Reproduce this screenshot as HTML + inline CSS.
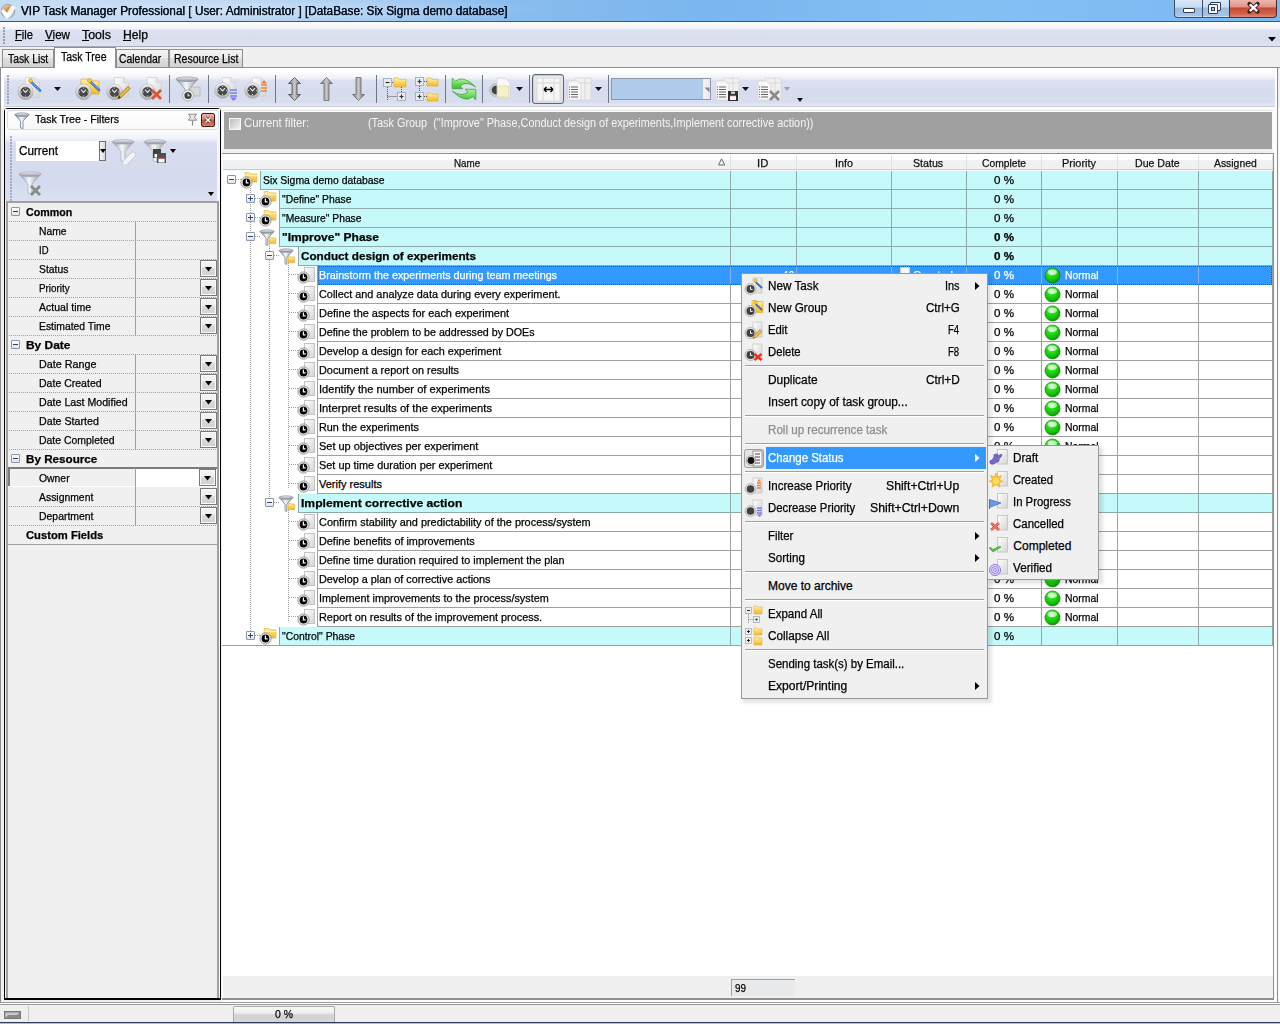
<!DOCTYPE html><html><head><meta charset="utf-8"><style>
*{box-sizing:border-box;margin:0;padding:0}
body{width:1280px;height:1024px;overflow:hidden;position:relative;background:#f0f0f0;font-family:"Liberation Sans",sans-serif;font-size:12px;color:#000}
.a{position:absolute}
.t{position:absolute;white-space:pre;-webkit-text-stroke:0.25px currentColor}
svg.a{overflow:visible}
</style></head><body>
<svg width="0" height="0" style="position:absolute">
<defs>
<radialGradient id="gball" cx="0.42" cy="0.3" r="0.75">
 <stop offset="0" stop-color="#e0ffe0"/><stop offset="0.3" stop-color="#2ee01e"/><stop offset="0.75" stop-color="#0cbc00"/><stop offset="1" stop-color="#067a00"/>
</radialGradient>
<linearGradient id="gfold" x1="0" y1="0" x2="0" y2="1"><stop offset="0" stop-color="#fff2b0"/><stop offset="0.5" stop-color="#fbd560"/><stop offset="1" stop-color="#f0b828"/></linearGradient>
<linearGradient id="gfun" x1="0" y1="0" x2="1" y2="0"><stop offset="0" stop-color="#8a9098"/><stop offset="0.45" stop-color="#f6f8fa"/><stop offset="1" stop-color="#8e949c"/></linearGradient>
<linearGradient id="grim" x1="0" y1="0" x2="0" y2="1"><stop offset="0" stop-color="#f2f4f6"/><stop offset="1" stop-color="#8890a0"/></linearGradient>
<linearGradient id="gpap" x1="0" y1="0" x2="1" y2="1"><stop offset="0" stop-color="#ffffff"/><stop offset="1" stop-color="#d4d4d4"/></linearGradient>
<linearGradient id="gring" x1="0" y1="0" x2="0" y2="1"><stop offset="0" stop-color="#f4f4f4"/><stop offset="1" stop-color="#a8a8a8"/></linearGradient>
<linearGradient id="garr" x1="0" y1="0" x2="1" y2="0"><stop offset="0" stop-color="#7a7a7a"/><stop offset="0.5" stop-color="#c8c8c8"/><stop offset="1" stop-color="#6a6a6a"/></linearGradient>
<linearGradient id="ggreen" x1="0" y1="0" x2="0" y2="1"><stop offset="0" stop-color="#a6f08a"/><stop offset="1" stop-color="#1fa81a"/></linearGradient>

<symbol id="ball" viewBox="0 0 17 17"><circle cx="8.5" cy="8.5" r="7.6" fill="url(#gball)" stroke="#0a6000" stroke-width="0.5"/><ellipse cx="8.3" cy="5.2" rx="4.6" ry="2.8" fill="#eaffea" opacity="0.7"/></symbol>
<symbol id="smclk" viewBox="0 0 13 13"><circle cx="6.5" cy="6.5" r="5.6" fill="#f4f4f6" stroke="#8a8a90" stroke-width="0.9"/><circle cx="6.5" cy="6.5" r="3.9" fill="#050505"/><path d="M6.4 3.6V6.9H8.6" stroke="#fff" stroke-width="1.2" fill="none"/></symbol>
<symbol id="folder" viewBox="0 0 14 12"><path d="M1.2 1.5h4.2l1.2 1.4h6.2v8.2H1.2z" fill="url(#gfold)" stroke="#e0b040" stroke-width="0.7"/><path d="M1.2 4.5h11.8" stroke="#fff4c0" stroke-width="0.8"/></symbol>
<symbol id="paper" viewBox="0 0 12 15"><rect x="1.5" y="0.5" width="10" height="14" fill="url(#gpap)" stroke="#c4c4c4" stroke-width="1"/></symbol>
<symbol id="paper_st" viewBox="0 0 12 16"><rect x="1.5" y="0.5" width="10" height="14.5" fill="url(#gpap)" stroke="#c8c8c8" stroke-width="1"/></symbol>
<symbol id="funnel_tree" viewBox="0 0 18 17"><path d="M1 2.2 L9 10 V16.2 L7.2 14.8 V10 Z" fill="none"/><path d="M1.2 2.4 L7 9.2 V15.8 L8.8 16.4 V9.2 L15 2.4Z" fill="url(#gfun)" stroke="#7a8088" stroke-width="0.8"/><ellipse cx="8.1" cy="2.5" rx="7" ry="1.7" fill="url(#grim)" stroke="#7a8090" stroke-width="0.6"/><path d="M10 8.2h2.2l0.7 0.8h3.8v5.6H10z" fill="url(#gfold)" stroke="#d8a838" stroke-width="0.6"/></symbol>
<symbol id="funnel_sm" viewBox="0 0 16 17"><path d="M1 2.6 L6.5 9.2 V15.8 L9 16.6 V9.2 L15 2.6Z" fill="url(#gfun)" stroke="#70808e" stroke-width="0.8"/><ellipse cx="8" cy="2.6" rx="7" ry="1.8" fill="url(#grim)" stroke="#6e7e90" stroke-width="0.6"/></symbol>

<symbol id="bigclk" viewBox="0 0 18 18"><circle cx="9" cy="9" r="8.3" fill="url(#gring)" stroke="#b0b0b0" stroke-width="0.6"/><circle cx="9" cy="9" r="5.8" fill="#484848" stroke="#d8d8d8" stroke-width="0.8"/><path d="M6.3 6.4 L9 9.4 L11.7 6.4" stroke="#f0f0f0" stroke-width="1.1" fill="none"/><circle cx="9" cy="4.8" r="0.6" fill="#eee"/><circle cx="9" cy="13.2" r="0.6" fill="#eee"/><circle cx="4.8" cy="9" r="0.6" fill="#eee"/><circle cx="13.2" cy="9" r="0.6" fill="#eee"/></symbol>
<symbol id="docfold" viewBox="0 0 15 21"><path d="M0.5 0.5H9.5L14.5 5.5V20.5H0.5Z" fill="url(#gpap)" stroke="#d0d0d0" stroke-width="0.8"/><path d="M9.5 0.5V5.5H14.5" fill="#e4e4e4" stroke="#c8c8c8" stroke-width="0.6"/></symbol>

<symbol id="tb_newtask" viewBox="0 0 28 26"><use href="#docfold" x="10" y="1" width="15" height="21"/><path d="M16 6 L25 14.5" stroke="#3a70c0" stroke-width="2.6" stroke-linecap="round"/><path d="M16 6 L25 14.5" stroke="#9cc0f0" stroke-width="1.2" stroke-dasharray="1 1"/><circle cx="15.5" cy="4.5" r="2" fill="#f6d030" stroke="#c09010" stroke-width="0.6"/><use href="#bigclk" x="2" y="7.5" width="17" height="17"/></symbol>
<symbol id="tb_newgroup" viewBox="0 0 28 26"><path d="M8 3h7l2 2h9v13H8z" fill="url(#gfold)" stroke="#e0b040" stroke-width="0.8"/><path d="M17.5 6 L26 14" stroke="#3a70c0" stroke-width="2.6" stroke-linecap="round"/><path d="M17.5 6 L26 14" stroke="#9cc0f0" stroke-width="1.2" stroke-dasharray="1 1"/><circle cx="16.5" cy="4.5" r="2" fill="#f6d030" stroke="#c09010" stroke-width="0.6"/><use href="#bigclk" x="2" y="7.5" width="17" height="17"/></symbol>
<symbol id="tb_edit" viewBox="0 0 28 26"><use href="#docfold" x="10" y="1" width="15" height="21"/><use href="#bigclk" x="2" y="7.5" width="17" height="17"/><path d="M14 23 L15 19.5 L24 10.5 L26 12.5 L17 21.5Z" fill="#f0c040" stroke="#8a6010" stroke-width="0.8"/><path d="M14 23 L15 19.5 L17 21.5Z" fill="#333"/></symbol>
<symbol id="tb_delete" viewBox="0 0 28 26"><use href="#docfold" x="10" y="1" width="15" height="21"/><use href="#bigclk" x="2" y="7.5" width="17" height="17"/><path d="M15 14 L24 23 M24 14 L15 23" stroke="#e8502a" stroke-width="2.6"/></symbol>
<symbol id="tb_funclock" viewBox="0 0 26 26"><path d="M1 3 L10 13 V21 L14 22 V13 L23 3Z" fill="url(#gfun)" stroke="#888" stroke-width="0.7"/><ellipse cx="12" cy="3.2" rx="11" ry="2.3" fill="url(#grim)" stroke="#8a8a8a" stroke-width="0.6"/><rect x="16" y="11" width="9" height="9" fill="#d8d8d8" stroke="#aaa" stroke-width="0.6"/><circle cx="13" cy="19.5" r="5.5" fill="#f0f0f0" stroke="#999" stroke-width="0.7"/><circle cx="13" cy="19.5" r="3.6" fill="#404040"/><path d="M13 17.3V19.8H15" stroke="#fff" stroke-width="0.9" fill="none"/></symbol>
<symbol id="tb_dec" viewBox="0 0 26 26"><use href="#docfold" x="9" y="1" width="14" height="20"/><use href="#bigclk" x="1" y="6" width="17" height="17"/><path d="M17 14h7M17 17h7M17 20h7" stroke="#7a80e8" stroke-width="1.6"/><path d="M17 21.5h7L20.5 25Z" fill="#7a80e8"/></symbol>
<symbol id="tb_inc" viewBox="0 0 26 26"><use href="#docfold" x="9" y="1" width="14" height="20"/><use href="#bigclk" x="1" y="6" width="17" height="17"/><path d="M18 9h6M18 12h6M18 15h6" stroke="#f08040" stroke-width="1.6"/><path d="M18 7.5h6L21 4Z" fill="#f08040"/></symbol>
<symbol id="arr_both" viewBox="0 0 13 24"><path d="M6.5 0.5L12.5 6.5H9V17.5H12.5L6.5 23.5L0.5 17.5H4V6.5H0.5Z" fill="url(#garr)" stroke="#4a4a4a" stroke-width="0.8"/></symbol>
<symbol id="arr_up" viewBox="0 0 13 24"><path d="M6.5 0.5L12.5 6.5H9V23.5H4V6.5H0.5Z" fill="url(#garr)" stroke="#6a6a6a" stroke-width="0.8"/></symbol>
<symbol id="arr_down" viewBox="0 0 13 24"><path d="M4 0.5H9V17.5H12.5L6.5 23.5L0.5 17.5H4Z" fill="url(#garr)" stroke="#6a6a6a" stroke-width="0.8"/></symbol>
<symbol id="tb_expand" viewBox="0 0 26 24"><rect x="1.5" y="1.5" width="8" height="8" fill="#e8ecf2" stroke="#9aa6b4" stroke-width="0.8"/><path d="M3.5 5.5h4" stroke="#333" stroke-width="1.2"/><path d="M12 1h4l1 1.3h7V10H12z" fill="url(#gfold)" stroke="#e0b040" stroke-width="0.7"/><rect x="15.5" y="15.5" width="8" height="8" fill="#e8ecf2" stroke="#9aa6b4" stroke-width="0.8"/><path d="M17.5 19.5h4M19.5 17.5v4" stroke="#333" stroke-width="1.2"/><path d="M5.5 10V23M5.5 19.5H15M19.5 10V15M10 5.5H12" stroke="#333" stroke-width="0.8" stroke-dasharray="1 1"/></symbol>
<symbol id="tb_collapse" viewBox="0 0 26 26"><rect x="1.5" y="1.5" width="8" height="8" fill="#e8ecf2" stroke="#9aa6b4" stroke-width="0.8"/><path d="M3.5 5.5h4M5.5 3.5v4" stroke="#333" stroke-width="1.2"/><path d="M13 2h4l1 1.3h6V10H13z" fill="url(#gfold)" stroke="#e0b040" stroke-width="0.7"/><rect x="1.5" y="16.5" width="8" height="8" fill="#e8ecf2" stroke="#9aa6b4" stroke-width="0.8"/><path d="M3.5 20.5h4M5.5 18.5v4" stroke="#333" stroke-width="1.2"/><path d="M13 17h4l1 1.3h6V25H13z" fill="url(#gfold)" stroke="#e0b040" stroke-width="0.7"/><path d="M5.5 10V16M10 5.5H13M10 20.5H13" stroke="#333" stroke-width="0.8" stroke-dasharray="1 1"/></symbol>
<symbol id="tb_refresh" viewBox="0 0 30 28"><path d="M3.2 3 L6.3 6.2 Q14 -0.5 26.6 11.8 Q17 5.5 11 11 L13.7 13.7 L3.2 13.7 Z" fill="url(#ggreen2)" stroke="#3c9a34" stroke-width="0.7" stroke-linejoin="round"/><path d="M26.8 25 L23.7 21.8 Q16 28.5 3.4 16.2 Q13 22.5 19 17 L16.3 14.3 L26.8 14.3 Z" fill="url(#ggreen3)" stroke="#3c9a34" stroke-width="0.7" stroke-linejoin="round"/></symbol>
<linearGradient id="ggreen2" x1="0" y1="0" x2="0" y2="1"><stop offset="0" stop-color="#c8f8b8"/><stop offset="0.6" stop-color="#58d848"/><stop offset="1" stop-color="#3cc030"/></linearGradient>
<linearGradient id="ggreen3" x1="0" y1="0" x2="0" y2="1"><stop offset="0" stop-color="#a8f098"/><stop offset="0.5" stop-color="#78e068"/><stop offset="1" stop-color="#40c434"/></linearGradient>
<symbol id="tb_clockpaper" viewBox="0 0 26 24"><circle cx="8" cy="13" r="6.5" fill="#c8c8c8" stroke="#aaa" stroke-width="0.6"/><circle cx="8" cy="13" r="4.3" fill="#404040"/><path d="M9 1h8l5 5v15H9z" fill="#f8f8f8" stroke="#d0d0d0" stroke-width="0.8"/><rect x="9.5" y="9" width="11" height="11" fill="#f6f0c8" stroke="#d8d0a0" stroke-width="0.6"/></symbol>
<symbol id="tb_table" viewBox="0 0 25 25"><rect x="1" y="1" width="23" height="23" fill="#f6f6f6" stroke="#d8d8d8" stroke-width="0.8"/><path d="M7 1V24M18 1V24M1 6H24" stroke="#d0d0d0" stroke-width="0.8"/><path d="M8 12.5H17M8 12.5L10.5 10M8 12.5L10.5 15M17 12.5L14.5 10M17 12.5L14.5 15" stroke="#000" stroke-width="1.4"/></symbol>
<symbol id="tb_report" viewBox="0 0 25 24"><rect x="8" y="1" width="16" height="22" fill="#f0f0f0" stroke="#d8d8d8" stroke-width="0.8"/><path d="M18 1V23M8 6H24" stroke="#d4d4d4" stroke-width="0.8"/><path d="M1 4H10L14 8V23H1Z" fill="#f8f8f8" stroke="#d4d4d4" stroke-width="0.8"/><path d="M4 10h7M4 12.5h7M4 15h7M4 17.5h7M4 20h7" stroke="#555" stroke-width="0.9"/><path d="M2 10h1M2 12.5h1M2 15h1M2 17.5h1M2 20h1" stroke="#555" stroke-width="0.9"/></symbol>
<symbol id="tb_save" viewBox="0 0 25 24"><use href="#tb_report" x="0" y="0" width="25" height="24"/><path d="M13 14h10v10H13z" fill="#303030"/><rect x="15" y="19" width="6" height="4" fill="#fff"/><rect x="15" y="18" width="6" height="1.2" fill="#e03030"/><rect x="16" y="14.5" width="4" height="2.5" fill="#c8c8c8"/></symbol>
<symbol id="tb_delrep" viewBox="0 0 25 24"><use href="#tb_report" x="0" y="0" width="25" height="24"/><path d="M13 14 L22 23 M22 14 L13 23" stroke="#8a8a8a" stroke-width="2.6"/></symbol>

<symbol id="pn_funerase" viewBox="0 0 25 25"><path d="M1 2.5 L10 12.5 V22 L14 23 V12.5 L23 2.5Z" fill="url(#gfun)" stroke="#9aa0a8" stroke-width="0.6"/><ellipse cx="12" cy="2.8" rx="11" ry="2.2" fill="url(#grim)" stroke="#9aa0a8" stroke-width="0.6"/><path d="M12 22 L20 14 A2.5 2.5 0 0 1 24 17.5 L16 25.5 A2.5 2.5 0 0 1 12 22Z" fill="#f4f4f4" stroke="#b8b8b8" stroke-width="0.7"/></symbol>
<symbol id="pn_funsave" viewBox="0 0 25 25"><path d="M1 2.5 L10 12.5 V22 L14 23 V12.5 L23 2.5Z" fill="url(#gfun)" stroke="#9aa0a8" stroke-width="0.6"/><ellipse cx="12" cy="2.8" rx="11" ry="2.2" fill="url(#grim)" stroke="#9aa0a8" stroke-width="0.6"/><path d="M10 10h8v9h-8z" fill="#404040"/><rect x="11.5" y="15" width="5" height="3.5" fill="#fff"/><path d="M14 14h9v10h-9z" fill="#505050"/><rect x="15.5" y="19.5" width="6" height="4" fill="#fff"/><rect x="15.5" y="18.6" width="6" height="1" fill="#e03030"/></symbol>
<symbol id="pn_funclear" viewBox="0 0 26 26"><path d="M1 3 L10 13 V22 L14 23 V13 L23 3Z" fill="url(#gfun)" stroke="#9aa0a8" stroke-width="0.6"/><ellipse cx="12" cy="3.2" rx="11" ry="2.3" fill="url(#grim)" stroke="#9aa0a8" stroke-width="0.6"/><path d="M13 15 L22 24 M22 15 L13 24" stroke="#8a8a8a" stroke-width="2.8"/></symbol>

<symbol id="mi_newtask" viewBox="0 0 20 19"><rect x="9" y="1" width="9" height="15" fill="url(#gpap)" stroke="#c8c8c8" stroke-width="0.8"/><path d="M12 5.5L17.5 10.5" stroke="#3a70c0" stroke-width="2" stroke-linecap="round"/><circle cx="11.5" cy="3.5" r="1.8" fill="#f6d030" stroke="#c09010" stroke-width="0.5"/><circle cx="6.5" cy="12" r="5.6" fill="#e0e0e0" stroke="#999" stroke-width="0.6"/><circle cx="6.5" cy="12" r="4" fill="#404040"/><path d="M6.5 9.6V12.4H8.6" stroke="#fff" stroke-width="1" fill="none"/></symbol>
<symbol id="mi_newgroup" viewBox="0 0 20 19"><path d="M8 1.5h4l1 1h6v11H8z" fill="url(#gfold)" stroke="#e0b040" stroke-width="0.7"/><path d="M12 5.5L17.5 10.5" stroke="#3a70c0" stroke-width="2" stroke-linecap="round"/><circle cx="11.5" cy="3.5" r="1.8" fill="#f6d030" stroke="#c09010" stroke-width="0.5"/><circle cx="6.5" cy="12" r="5.6" fill="#e0e0e0" stroke="#999" stroke-width="0.6"/><circle cx="6.5" cy="12" r="4" fill="#404040"/><path d="M6.5 9.6V12.4H8.6" stroke="#fff" stroke-width="1" fill="none"/></symbol>
<symbol id="mi_edit" viewBox="0 0 20 19"><rect x="9" y="1" width="9" height="15" fill="url(#gpap)" stroke="#c8c8c8" stroke-width="0.8"/><circle cx="6.5" cy="12" r="5.6" fill="#e0e0e0" stroke="#999" stroke-width="0.6"/><circle cx="6.5" cy="12" r="4" fill="#404040"/><path d="M6.5 9.6V12.4H8.6" stroke="#fff" stroke-width="1" fill="none"/><path d="M9 17.5L10 14.5L16 8.5L18 10.5L12 16.5Z" fill="#f0c040" stroke="#8a6010" stroke-width="0.6"/></symbol>
<symbol id="mi_delete" viewBox="0 0 20 19"><rect x="9" y="1" width="9" height="15" fill="url(#gpap)" stroke="#c8c8c8" stroke-width="0.8"/><circle cx="6.5" cy="12" r="5.6" fill="#e0e0e0" stroke="#999" stroke-width="0.6"/><circle cx="6.5" cy="12" r="4" fill="#404040"/><path d="M6.5 9.6V12.4H8.6" stroke="#fff" stroke-width="1" fill="none"/><path d="M10.5 11L17.5 17M17.5 11L10.5 17" stroke="#e83020" stroke-width="2.4"/></symbol>
<symbol id="mi_status" viewBox="0 0 20 19"><rect x="0.5" y="0.5" width="19" height="18" rx="2" fill="#e4e4e4" stroke="#8a8a8a" stroke-width="0.8"/><rect x="9" y="2" width="9" height="15" fill="#f8f8f8" stroke="#707070" stroke-width="0.7"/><path d="M11 5h5M11 8h5M11 11h5M11 14h5" stroke="#333" stroke-width="0.9"/><circle cx="7" cy="11.5" r="4.8" fill="#d8d8d8" stroke="#888" stroke-width="0.6"/><circle cx="7" cy="11.5" r="3.4" fill="#111"/></symbol>
<symbol id="mi_inc" viewBox="0 0 20 19"><rect x="9" y="1" width="9" height="15" fill="url(#gpap)" stroke="#c8c8c8" stroke-width="0.8"/><path d="M13 6h4M13 8.5h4M13 11h4" stroke="#f08040" stroke-width="1.3"/><path d="M13 4.5h4L15 2Z" fill="#f08040"/><circle cx="6.5" cy="12" r="5.4" fill="#e0e0e0" stroke="#999" stroke-width="0.6"/><circle cx="6.5" cy="12" r="3.8" fill="#404040"/></symbol>
<symbol id="mi_dec" viewBox="0 0 20 19"><rect x="9" y="1" width="9" height="15" fill="url(#gpap)" stroke="#c8c8c8" stroke-width="0.8"/><path d="M13 9h5M13 11.5h5M13 14h5" stroke="#7a80e8" stroke-width="1.3"/><path d="M13 15.5h5L15.5 18Z" fill="#7a80e8"/><circle cx="6.5" cy="12" r="5.4" fill="#e0e0e0" stroke="#999" stroke-width="0.6"/><circle cx="6.5" cy="12" r="3.8" fill="#404040"/></symbol>
<symbol id="mi_expand" viewBox="0 0 20 19"><rect x="1.5" y="2.5" width="6" height="6" fill="#eef0f4" stroke="#9aa6b4" stroke-width="0.7"/><path d="M3 5.5h3" stroke="#222" stroke-width="1"/><path d="M10 1h3l1 1h4v7h-8z" fill="url(#gfold)" stroke="#e0b040" stroke-width="0.6"/><rect x="9.5" y="11.5" width="6" height="6" fill="#eef0f4" stroke="#9aa6b4" stroke-width="0.7"/><circle cx="12.5" cy="14.5" r="1.1" fill="#222"/><path d="M4.5 9V18M4.5 14.5H9.5" stroke="#555" stroke-width="0.7" stroke-dasharray="0.8 0.8"/></symbol>
<symbol id="mi_collapse" viewBox="0 0 20 19"><rect x="1.5" y="1.5" width="6" height="6" fill="#eef0f4" stroke="#9aa6b4" stroke-width="0.7"/><path d="M3 4.5h3M4.5 3v3" stroke="#222" stroke-width="1"/><path d="M10 1h3l1 1h4v6h-8z" fill="url(#gfold)" stroke="#e0b040" stroke-width="0.6"/><rect x="1.5" y="10.5" width="6" height="6" fill="#eef0f4" stroke="#9aa6b4" stroke-width="0.7"/><path d="M3 13.5h3M4.5 12v3" stroke="#222" stroke-width="1"/><path d="M10 10h3l1 1h4v7h-8z" fill="url(#gfold)" stroke="#e0b040" stroke-width="0.6"/></symbol>

<symbol id="st_draft" viewBox="0 0 16 16"><path d="M2 13 Q1 10 4 10 L6 7 Q5 4 8 4 Q10 3 10 6 L13 4 Q15 5 13 7 L11 9 Q12 12 9 12 L6 14 Q3 15 2 13Z" fill="#7a68c8" stroke="#5a4aa8" stroke-width="0.6"/></symbol>
<symbol id="st_created" viewBox="0 0 16 16"><path d="M8 1L9.5 5L13.5 3.5L11.5 7.5L15 9.5L11 10.5L12 15L8 12.5L4 15L5 10.5L1 9.5L4.5 7.5L2.5 3.5L6.5 5Z" fill="#ffc830" stroke="#f0a020" stroke-width="0.6"/><circle cx="8" cy="9" r="3" fill="#ffe060"/></symbol>
<symbol id="st_prog" viewBox="0 0 16 16"><path d="M1.5 5.5 L13 9 L1.5 13.5Z" fill="#6a9ae8" stroke="#3a6ac0" stroke-width="0.7"/><path d="M1.5 5.5V15" stroke="#3a6ac0" stroke-width="1"/></symbol>
<symbol id="st_cancel" viewBox="0 0 16 16"><path d="M3 7 L11 14 M11 7 L3 14" stroke="#e84a3a" stroke-width="2.6"/><path d="M3 7 L11 14 M11 7 L3 14" stroke="#ff9a8a" stroke-width="0.8"/></symbol>
<symbol id="st_done" viewBox="0 0 16 16"><path d="M1 10 L5 14 L13 9 L11 8.5 L5 11.5 L3 9.5Z" fill="#60b848" stroke="#3a9a2a" stroke-width="0.6"/></symbol>
<symbol id="st_verif" viewBox="0 0 16 16"><circle cx="7" cy="10" r="5.5" fill="#e8e0ff" stroke="#8a70e0" stroke-width="1"/><circle cx="7" cy="10" r="3.5" fill="none" stroke="#8a70e0" stroke-width="0.9"/><circle cx="7" cy="10" r="1.5" fill="none" stroke="#8a70e0" stroke-width="0.8"/></symbol>
</defs></svg>
<div class="a" style="left:0px;top:0px;width:1280px;height:21px;background:linear-gradient(90deg,#c6dcf2 0%,#b8d4f1 18%,#a0c8f0 30%,#88bcef 40%,#7ab6ee 55%,#84bff4 75%,#7cb9f1 100%)"></div>
<div class="a" style="left:0px;top:0px;width:560px;height:21px;background:radial-gradient(ellipse 300px 14px at 250px 10px,rgba(255,255,255,0.35),rgba(255,255,255,0))"></div>
<div class="a" style="left:0px;top:21px;width:1280px;height:1px;background:#44566c"></div>
<svg class="a" style="left:0px;top:1px" width="18" height="18" viewBox="0 0 18 18"><defs><linearGradient id="gapp" x1="0" y1="0" x2="1" y2="1"><stop offset="0" stop-color="#ffd8a8"/><stop offset="0.6" stop-color="#ec8a1e"/><stop offset="1" stop-color="#c06010"/></linearGradient></defs><circle cx="8" cy="10.2" r="6.8" fill="#c8ccd4" stroke="#8a909a" stroke-width="0.8"/><path d="M2.6 8.6 L7.2 15.6 L13.8 5.4" stroke="#ffffff" stroke-width="4.2" fill="none" stroke-linejoin="round"/><path d="M2.2 7.2 L11.2 4.2 L7 11.6Z" fill="url(#gapp)"/></svg>
<div class="t" style="left:21.00px;top:4.84px;font-size:12px;line-height:12px;font-weight:400;color:#0a1424;transform:scaleX(0.9826);transform-origin:0 0;text-shadow:0 0 0.3px #0a1424;">VIP Task Manager Professional [ User: Administrator ] [DataBase: Six Sigma demo database]</div>
<div class="a" style="left:1174px;top:0;width:29px;height:18px;border:1px solid #3e4e66;border-top:none;border-radius:0 0 0 4px;background:linear-gradient(#d9e8f7 0%,#c6dbf1 42%,#9bbde3 47%,#a6c6ea 100%);box-shadow:inset 0 -1px 0 #c8dcf2"></div>
<div class="a" style="left:1202px;top:0;width:28px;height:18px;border:1px solid #3e4e66;border-top:none;background:linear-gradient(#d9e8f7 0%,#c6dbf1 42%,#9bbde3 47%,#a6c6ea 100%);box-shadow:inset 0 -1px 0 #c8dcf2"></div>
<div class="a" style="left:1229px;top:0;width:48px;height:18px;border:1px solid #4a2a2a;border-top:none;border-radius:0 0 4px 0;background:linear-gradient(#ecb8ae 0%,#e0948a 40%,#c84a34 47%,#d06048 80%,#e08a78 100%)"></div>
<div class="a" style="left:1183px;top:8px;width:12px;height:5px;background:#fff;border:1px solid #2e3c52;border-radius:1px"></div>
<div class="a" style="left:1210px;top:2px;width:11px;height:9px;border:1px solid #2e3c52;border-radius:1px;background:#f4f8fc"></div>
<div class="a" style="left:1208px;top:4px;width:10px;height:10px;border:1px solid #2e3c52;border-radius:1px;background:#f8fbff"></div>
<div class="a" style="left:1211px;top:7px;width:4px;height:4px;border:1px solid #2e3c52;background:#a8c4e4"></div>
<svg class="a" style="left:1247px;top:2px" width="13" height="11" viewBox="0 0 13 11"><path d="M2.5 2L10.5 9.5M10.5 2L2.5 9.5" stroke="#3a1a14" stroke-width="4.2" stroke-linecap="round"/><path d="M2.8 2.3L10.2 9.2M10.2 2.3L2.8 9.2" stroke="#fff" stroke-width="2.4"/></svg>
<div class="a" style="left:0px;top:22px;width:1280px;height:24px;background:linear-gradient(#fdfdfe 0%,#f3f5fa 26%,#dce2f1 34%,#d7deef 75%,#dfe4f2 100%)"></div>
<div class="a" style="left:0px;top:46px;width:1280px;height:1px;background:#a4a9b4"></div>
<div class="a" style="left:3px;top:27px;width:2px;height:2px;background:#98a0b0"></div>
<div class="a" style="left:3px;top:30px;width:2px;height:2px;background:#98a0b0"></div>
<div class="a" style="left:3px;top:33px;width:2px;height:2px;background:#98a0b0"></div>
<div class="a" style="left:3px;top:36px;width:2px;height:2px;background:#98a0b0"></div>
<div class="a" style="left:3px;top:39px;width:2px;height:2px;background:#98a0b0"></div>
<div class="a" style="left:3px;top:42px;width:2px;height:2px;background:#98a0b0"></div>
<div class="t" style="left:15.00px;top:28.84px;font-size:12px;line-height:12px;font-weight:400;color:#000;transform:scaleX(0.9309);transform-origin:0 0;">File</div>
<div class="a" style="left:15px;top:40px;width:7px;height:1px;background:#000"></div>
<div class="t" style="left:45.00px;top:28.84px;font-size:12px;line-height:12px;font-weight:400;color:#000;transform:scaleX(0.9692);transform-origin:0 0;">View</div>
<div class="a" style="left:45px;top:40px;width:9px;height:1px;background:#000"></div>
<div class="t" style="left:82.00px;top:28.84px;font-size:12px;line-height:12px;font-weight:400;color:#000;transform:scaleX(1.0352);transform-origin:0 0;">Tools</div>
<div class="a" style="left:82px;top:40px;width:7px;height:1px;background:#000"></div>
<div class="t" style="left:123.00px;top:28.84px;font-size:12px;line-height:12px;font-weight:400;color:#000;transform:scaleX(1.0130);transform-origin:0 0;">Help</div>
<div class="a" style="left:123px;top:40px;width:8px;height:1px;background:#000"></div>
<svg class="a" style="left:1268px;top:37px" width="8" height="5" viewBox="0 0 8 5"><path d="M0 0H8L4 4.5Z" fill="#000"/></svg>
<div class="a" style="left:0px;top:47px;width:1280px;height:21px;background:#f0f0f0"></div>
<div class="a" style="left:0px;top:67px;width:1280px;height:1px;background:#8c8f96"></div>
<div class="a" style="left:2px;top:49px;width:52px;height:18px;border:1px solid #8c8f96;border-bottom:none;background:linear-gradient(#f3f3f3 0%,#ececec 45%,#dedede 50%,#d2d2d2 100%)"></div>
<div class="t" style="left:7.60px;top:52.84px;font-size:12px;line-height:12px;font-weight:400;color:#000;transform:scaleX(0.8622);transform-origin:0 0;">Task List</div>
<div class="a" style="left:116px;top:49px;width:53px;height:18px;border:1px solid #8c8f96;border-bottom:none;background:linear-gradient(#f3f3f3 0%,#ececec 45%,#dedede 50%,#d2d2d2 100%)"></div>
<div class="t" style="left:118.80px;top:52.84px;font-size:12px;line-height:12px;font-weight:400;color:#000;transform:scaleX(0.8666);transform-origin:0 0;">Calendar</div>
<div class="a" style="left:169px;top:49px;width:74px;height:18px;border:1px solid #8c8f96;border-bottom:none;background:linear-gradient(#f3f3f3 0%,#ececec 45%,#dedede 50%,#d2d2d2 100%)"></div>
<div class="t" style="left:173.60px;top:52.84px;font-size:12px;line-height:12px;font-weight:400;color:#000;transform:scaleX(0.8778);transform-origin:0 0;">Resource List</div>
<div class="a" style="left:54px;top:47px;width:62px;height:21px;border:1px solid #8c8f96;border-bottom:none;background:#fff"></div>
<div class="t" style="left:61.30px;top:50.84px;font-size:12px;line-height:12px;font-weight:400;color:#000;transform:scaleX(0.8747);transform-origin:0 0;">Task Tree</div>
<div class="a" style="left:0px;top:68px;width:1px;height:934px;background:#8c8c8c"></div>
<div class="a" style="left:1277px;top:68px;width:1px;height:934px;background:#8c8c8c"></div>
<div class="a" style="left:1px;top:68px;width:1276px;height:40px;background:#ffffff"></div>
<div class="a" style="left:4px;top:72px;width:1271px;height:34px;background:linear-gradient(#fdfdfe 0%,#f0f2f9 18%,#dde2f1 24%,#d5dcee 60%,#d8deef 88%,#e4e8f4 100%)"></div>
<div class="a" style="left:4px;top:106px;width:1271px;height:1px;background:#c8cdd8"></div>
<div class="a" style="left:7px;top:75px;width:2px;height:2px;background:#a2a8ba"></div>
<div class="a" style="left:7px;top:78px;width:2px;height:2px;background:#a2a8ba"></div>
<div class="a" style="left:7px;top:81px;width:2px;height:2px;background:#a2a8ba"></div>
<div class="a" style="left:7px;top:84px;width:2px;height:2px;background:#a2a8ba"></div>
<div class="a" style="left:7px;top:87px;width:2px;height:2px;background:#a2a8ba"></div>
<div class="a" style="left:7px;top:90px;width:2px;height:2px;background:#a2a8ba"></div>
<div class="a" style="left:7px;top:93px;width:2px;height:2px;background:#a2a8ba"></div>
<div class="a" style="left:7px;top:96px;width:2px;height:2px;background:#a2a8ba"></div>
<div class="a" style="left:7px;top:99px;width:2px;height:2px;background:#a2a8ba"></div>
<div class="a" style="left:7px;top:102px;width:2px;height:2px;background:#a2a8ba"></div>
<div class="a" style="left:169px;top:75px;width:1px;height:28px;background:#6e7888"></div>
<div class="a" style="left:208px;top:75px;width:1px;height:28px;background:#6e7888"></div>
<div class="a" style="left:275px;top:75px;width:1px;height:28px;background:#6e7888"></div>
<div class="a" style="left:376px;top:75px;width:1px;height:28px;background:#6e7888"></div>
<div class="a" style="left:445px;top:75px;width:1px;height:28px;background:#6e7888"></div>
<div class="a" style="left:482px;top:75px;width:1px;height:28px;background:#6e7888"></div>
<div class="a" style="left:529px;top:75px;width:1px;height:28px;background:#6e7888"></div>
<div class="a" style="left:608px;top:75px;width:1px;height:28px;background:#6e7888"></div>
<svg class="a" style="left:15px;top:76px" width="28" height="26"><use href="#tb_newtask"/></svg>
<svg class="a" style="left:54px;top:87px" width="7" height="4" viewBox="0 0 7 4"><path d="M0 0H7L3.5 4Z" fill="#111"/></svg>
<svg class="a" style="left:73px;top:76px" width="28" height="26"><use href="#tb_newgroup"/></svg>
<svg class="a" style="left:104px;top:76px" width="28" height="26"><use href="#tb_edit"/></svg>
<svg class="a" style="left:137px;top:76px" width="28" height="26"><use href="#tb_delete"/></svg>
<svg class="a" style="left:175px;top:76px" width="26" height="26"><use href="#tb_funclock"/></svg>
<svg class="a" style="left:213px;top:76px" width="26" height="26"><use href="#tb_dec"/></svg>
<svg class="a" style="left:243px;top:76px" width="26" height="26"><use href="#tb_inc"/></svg>
<svg class="a" style="left:288px;top:77px" width="13" height="24"><use href="#arr_both"/></svg>
<svg class="a" style="left:320px;top:77px" width="13" height="24"><use href="#arr_up"/></svg>
<svg class="a" style="left:352px;top:77px" width="13" height="24"><use href="#arr_down"/></svg>
<svg class="a" style="left:382px;top:77px" width="26" height="24"><use href="#tb_expand"/></svg>
<svg class="a" style="left:414px;top:76px" width="26" height="26"><use href="#tb_collapse"/></svg>
<svg class="a" style="left:449px;top:75px" width="30" height="28"><use href="#tb_refresh"/></svg>
<svg class="a" style="left:488px;top:77px" width="26" height="24"><use href="#tb_clockpaper"/></svg>
<svg class="a" style="left:516px;top:87px" width="7" height="4" viewBox="0 0 7 4"><path d="M0 0H7L3.5 4Z" fill="#111"/></svg>
<div class="a" style="left:532px;top:74px;width:32px;height:30px;border:1px solid #5e6674;border-radius:3px;background:linear-gradient(#e9eaed,#dcdee3);box-shadow:inset 1px 1px 0 #c8ccd2"></div>
<svg class="a" style="left:536px;top:77px" width="25" height="25"><use href="#tb_table"/></svg>
<svg class="a" style="left:567px;top:77px" width="25" height="24"><use href="#tb_report"/></svg>
<svg class="a" style="left:595px;top:87px" width="7" height="4" viewBox="0 0 7 4"><path d="M0 0H7L3.5 4Z" fill="#111"/></svg>
<div class="a" style="left:611px;top:78px;width:100px;height:22px;border:1px solid #8e98a6;background:#aecbea"></div>
<div class="a" style="left:703px;top:79px;width:7px;height:20px;background:linear-gradient(90deg,#f4f4f4,#e8e8e8)"></div>
<svg class="a" style="left:704px;top:87px" width="6" height="6" viewBox="0 0 6 6"><path d="M0.5 0.5L5.5 5.5V0.5Z" fill="#888"/></svg>
<svg class="a" style="left:715px;top:77px" width="25" height="24"><use href="#tb_save"/></svg>
<svg class="a" style="left:742px;top:87px" width="7" height="4" viewBox="0 0 7 4"><path d="M0 0H7L3.5 4Z" fill="#111"/></svg>
<svg class="a" style="left:757px;top:77px" width="25" height="24"><use href="#tb_delrep"/></svg>
<svg class="a" style="left:784px;top:87px" width="6" height="4" viewBox="0 0 6 4"><path d="M0 0H6L3 4Z" fill="#9aa0aa"/></svg>
<svg class="a" style="left:797px;top:98px" width="6" height="4" viewBox="0 0 6 4"><path d="M0 0H6L3 4Z" fill="#111"/></svg>
<div class="a" style="left:4px;top:108px;width:217px;height:892px;background:#000;border-radius:4px 4px 0 0"></div>
<div class="a" style="left:5px;top:109px;width:215px;height:889px;background:#f0f0f0"></div>
<div class="a" style="left:221px;top:108px;width:1px;height:892px;background:#f4f4f4"></div>
<div class="a" style="left:5px;top:109px;width:215px;height:22px;background:#fbfbfc"></div>
<div class="a" style="left:7px;top:110px;width:212px;height:20px;border:1px solid #d8dce4;border-radius:3px;background:linear-gradient(#ffffff,#f7f8fa)"></div>
<svg class="a" style="left:14px;top:112px" width="16" height="17"><use href="#funnel_sm"/></svg>
<div class="t" style="left:35.00px;top:113.69px;font-size:11px;line-height:11px;font-weight:400;color:#000;transform:scaleX(0.9611);transform-origin:0 0;">Task Tree - Filters</div>
<svg class="a" style="left:187px;top:113px" width="11" height="13" viewBox="0 0 11 13"><path d="M1.5 1.2h8L7.5 4.2L9.5 7.2h-8L3.5 4.2Z" fill="#e8e8e8" stroke="#8a8a8a" stroke-width="1"/><path d="M5.5 7.5v5" stroke="#8a8a8a" stroke-width="1.2"/></svg>
<div class="a" style="left:201px;top:113px;width:14px;height:14px;border:1px solid #4a1a14;border-radius:2px;background:linear-gradient(#eab4a6 0%,#dc8c78 40%,#c4543c 55%,#d8806a 100%)"></div>
<svg class="a" style="left:204px;top:116px" width="8" height="8" viewBox="0 0 8 8"><path d="M1.5 1.5L6.5 6.5M6.5 1.5L1.5 6.5" stroke="#3a1a14" stroke-width="2.8"/><path d="M1.5 1.5L6.5 6.5M6.5 1.5L1.5 6.5" stroke="#fff" stroke-width="1.6"/></svg>
<div class="a" style="left:5px;top:131px;width:215px;height:70px;background:linear-gradient(#fdfdfe 0%,#eef0f7 12%,#d8deef 17%,#d3daed 70%,#dbe1f0 100%)"></div>
<div class="a" style="left:217px;top:131px;width:3px;height:70px;background:#f4f5f8"></div>
<div class="a" style="left:10px;top:136px;width:2px;height:2px;background:#a6acbe"></div>
<div class="a" style="left:10px;top:139px;width:2px;height:2px;background:#a6acbe"></div>
<div class="a" style="left:10px;top:142px;width:2px;height:2px;background:#a6acbe"></div>
<div class="a" style="left:10px;top:145px;width:2px;height:2px;background:#a6acbe"></div>
<div class="a" style="left:10px;top:148px;width:2px;height:2px;background:#a6acbe"></div>
<div class="a" style="left:10px;top:151px;width:2px;height:2px;background:#a6acbe"></div>
<div class="a" style="left:10px;top:154px;width:2px;height:2px;background:#a6acbe"></div>
<div class="a" style="left:10px;top:157px;width:2px;height:2px;background:#a6acbe"></div>
<div class="a" style="left:10px;top:160px;width:2px;height:2px;background:#a6acbe"></div>
<div class="a" style="left:10px;top:163px;width:2px;height:2px;background:#a6acbe"></div>
<div class="a" style="left:10px;top:166px;width:2px;height:2px;background:#a6acbe"></div>
<div class="a" style="left:10px;top:169px;width:2px;height:2px;background:#a6acbe"></div>
<div class="a" style="left:10px;top:172px;width:2px;height:2px;background:#a6acbe"></div>
<div class="a" style="left:10px;top:175px;width:2px;height:2px;background:#a6acbe"></div>
<div class="a" style="left:10px;top:178px;width:2px;height:2px;background:#a6acbe"></div>
<div class="a" style="left:10px;top:181px;width:2px;height:2px;background:#a6acbe"></div>
<div class="a" style="left:10px;top:184px;width:2px;height:2px;background:#a6acbe"></div>
<div class="a" style="left:10px;top:187px;width:2px;height:2px;background:#a6acbe"></div>
<div class="a" style="left:10px;top:190px;width:2px;height:2px;background:#a6acbe"></div>
<div class="a" style="left:10px;top:193px;width:2px;height:2px;background:#a6acbe"></div>
<div class="a" style="left:10px;top:196px;width:2px;height:2px;background:#a6acbe"></div>
<div class="a" style="left:10px;top:199px;width:2px;height:2px;background:#a6acbe"></div>
<div class="a" style="left:16px;top:141px;width:83px;height:20px;background:#fff"></div>
<div class="a" style="left:99px;top:141px;width:7px;height:20px;border:1px solid #707070;background:linear-gradient(90deg,#f8f8f8,#d8d8d8)"></div>
<svg class="a" style="left:100px;top:149px" width="6" height="4" viewBox="0 0 6 4"><path d="M0 0H6L3 4Z" fill="#000"/></svg>
<div class="t" style="left:18.50px;top:144.84px;font-size:12px;line-height:12px;font-weight:400;color:#000;transform:scaleX(0.9747);transform-origin:0 0;">Current</div>
<svg class="a" style="left:111px;top:139px" width="25" height="25"><use href="#pn_funerase"/></svg>
<svg class="a" style="left:143px;top:139px" width="25" height="25"><use href="#pn_funsave"/></svg>
<svg class="a" style="left:170px;top:149px" width="6" height="4" viewBox="0 0 6 4"><path d="M0 0H6L3 4Z" fill="#000"/></svg>
<svg class="a" style="left:18px;top:171px" width="26" height="26"><use href="#pn_funclear"/></svg>
<svg class="a" style="left:208px;top:192px" width="6" height="4" viewBox="0 0 6 4"><path d="M0 0H6L3 4Z" fill="#000"/></svg>
<div class="a" style="left:6px;top:201px;width:213px;height:797px;background:#f0f0f0"></div>
<div class="a" style="left:6px;top:201px;width:213px;height:2px;background:#a0a0a0"></div>
<div class="a" style="left:6px;top:201px;width:2px;height:797px;background:#a0a0a0"></div>
<div class="a" style="left:217px;top:201px;width:2px;height:797px;background:#a0a0a0"></div>
<div class="a" style="left:219px;top:201px;width:1px;height:797px;background:#fafafa"></div>
<div class="a" style="left:11px;top:207px;width:9px;height:9px;border:1px solid #8c96a4;border-radius:1px;background:linear-gradient(#ffffff,#dfe3ea)"></div>
<div class="a" style="left:13px;top:211px;width:5px;height:1px;background:#2e3e5e"></div>
<div class="t" style="left:25.70px;top:206.69px;font-size:11px;line-height:11px;font-weight:700;color:#000;transform:scaleX(0.9693);transform-origin:0 0;">Common</div>
<div class="a" style="left:9px;top:221px;width:208px;height:1px;background-image:linear-gradient(90deg,#a0a0a0 50%,transparent 50%);background-size:2px 1px"></div>
<div class="t" style="left:38.60px;top:225.69px;font-size:11px;line-height:11px;font-weight:400;color:#000;transform:scaleX(0.9372);transform-origin:0 0;">Name</div>
<div class="a" style="left:135px;top:221px;width:1px;height:19px;background:#a0a0a0"></div>
<div class="a" style="left:9px;top:240px;width:208px;height:1px;background-image:linear-gradient(90deg,#a0a0a0 50%,transparent 50%);background-size:2px 1px"></div>
<div class="t" style="left:38.60px;top:244.69px;font-size:11px;line-height:11px;font-weight:400;color:#000;transform:scaleX(0.8636);transform-origin:0 0;">ID</div>
<div class="a" style="left:135px;top:240px;width:1px;height:19px;background:#a0a0a0"></div>
<div class="a" style="left:9px;top:259px;width:208px;height:1px;background-image:linear-gradient(90deg,#a0a0a0 50%,transparent 50%);background-size:2px 1px"></div>
<div class="t" style="left:38.60px;top:263.69px;font-size:11px;line-height:11px;font-weight:400;color:#000;transform:scaleX(0.9396);transform-origin:0 0;">Status</div>
<div class="a" style="left:135px;top:259px;width:1px;height:19px;background:#a0a0a0"></div>
<div class="a" style="left:200px;top:260px;width:17px;height:17px;border:1px solid #7a7a7a;background:linear-gradient(#f4f4f4 0%,#eeeeee 45%,#d9d9d9 50%,#d2d2d2 100%);box-shadow:inset 0 0 0 1px #fbfbfb"></div>
<svg class="a" style="left:205px;top:267px" width="7" height="5" viewBox="0 0 7 5"><path d="M0 0H7L3.5 4.5Z" fill="#000"/></svg>
<div class="a" style="left:9px;top:278px;width:208px;height:1px;background-image:linear-gradient(90deg,#a0a0a0 50%,transparent 50%);background-size:2px 1px"></div>
<div class="t" style="left:38.60px;top:282.69px;font-size:11px;line-height:11px;font-weight:400;color:#000;transform:scaleX(0.8941);transform-origin:0 0;">Priority</div>
<div class="a" style="left:135px;top:278px;width:1px;height:19px;background:#a0a0a0"></div>
<div class="a" style="left:200px;top:279px;width:17px;height:17px;border:1px solid #7a7a7a;background:linear-gradient(#f4f4f4 0%,#eeeeee 45%,#d9d9d9 50%,#d2d2d2 100%);box-shadow:inset 0 0 0 1px #fbfbfb"></div>
<svg class="a" style="left:205px;top:286px" width="7" height="5" viewBox="0 0 7 5"><path d="M0 0H7L3.5 4.5Z" fill="#000"/></svg>
<div class="a" style="left:9px;top:297px;width:208px;height:1px;background-image:linear-gradient(90deg,#a0a0a0 50%,transparent 50%);background-size:2px 1px"></div>
<div class="t" style="left:38.60px;top:301.69px;font-size:11px;line-height:11px;font-weight:400;color:#000;transform:scaleX(0.9576);transform-origin:0 0;">Actual time</div>
<div class="a" style="left:135px;top:297px;width:1px;height:19px;background:#a0a0a0"></div>
<div class="a" style="left:200px;top:298px;width:17px;height:17px;border:1px solid #7a7a7a;background:linear-gradient(#f4f4f4 0%,#eeeeee 45%,#d9d9d9 50%,#d2d2d2 100%);box-shadow:inset 0 0 0 1px #fbfbfb"></div>
<svg class="a" style="left:205px;top:305px" width="7" height="5" viewBox="0 0 7 5"><path d="M0 0H7L3.5 4.5Z" fill="#000"/></svg>
<div class="a" style="left:9px;top:316px;width:208px;height:1px;background-image:linear-gradient(90deg,#a0a0a0 50%,transparent 50%);background-size:2px 1px"></div>
<div class="t" style="left:38.60px;top:320.69px;font-size:11px;line-height:11px;font-weight:400;color:#000;transform:scaleX(0.9419);transform-origin:0 0;">Estimated Time</div>
<div class="a" style="left:135px;top:316px;width:1px;height:19px;background:#a0a0a0"></div>
<div class="a" style="left:200px;top:317px;width:17px;height:17px;border:1px solid #7a7a7a;background:linear-gradient(#f4f4f4 0%,#eeeeee 45%,#d9d9d9 50%,#d2d2d2 100%);box-shadow:inset 0 0 0 1px #fbfbfb"></div>
<svg class="a" style="left:205px;top:324px" width="7" height="5" viewBox="0 0 7 5"><path d="M0 0H7L3.5 4.5Z" fill="#000"/></svg>
<div class="a" style="left:9px;top:335px;width:208px;height:1px;background-image:linear-gradient(90deg,#a0a0a0 50%,transparent 50%);background-size:2px 1px"></div>
<div class="a" style="left:11px;top:340px;width:9px;height:9px;border:1px solid #8c96a4;border-radius:1px;background:linear-gradient(#ffffff,#dfe3ea)"></div>
<div class="a" style="left:13px;top:344px;width:5px;height:1px;background:#2e3e5e"></div>
<div class="t" style="left:25.70px;top:339.69px;font-size:11px;line-height:11px;font-weight:700;color:#000;transform:scaleX(1.0840);transform-origin:0 0;">By Date</div>
<div class="a" style="left:9px;top:354px;width:208px;height:1px;background-image:linear-gradient(90deg,#a0a0a0 50%,transparent 50%);background-size:2px 1px"></div>
<div class="t" style="left:38.60px;top:358.69px;font-size:11px;line-height:11px;font-weight:400;color:#000;transform:scaleX(0.9795);transform-origin:0 0;">Date Range</div>
<div class="a" style="left:135px;top:354px;width:1px;height:19px;background:#a0a0a0"></div>
<div class="a" style="left:200px;top:355px;width:17px;height:17px;border:1px solid #7a7a7a;background:linear-gradient(#f4f4f4 0%,#eeeeee 45%,#d9d9d9 50%,#d2d2d2 100%);box-shadow:inset 0 0 0 1px #fbfbfb"></div>
<svg class="a" style="left:205px;top:362px" width="7" height="5" viewBox="0 0 7 5"><path d="M0 0H7L3.5 4.5Z" fill="#000"/></svg>
<div class="a" style="left:9px;top:373px;width:208px;height:1px;background-image:linear-gradient(90deg,#a0a0a0 50%,transparent 50%);background-size:2px 1px"></div>
<div class="t" style="left:38.60px;top:377.69px;font-size:11px;line-height:11px;font-weight:400;color:#000;transform:scaleX(0.9568);transform-origin:0 0;">Date Created</div>
<div class="a" style="left:135px;top:373px;width:1px;height:19px;background:#a0a0a0"></div>
<div class="a" style="left:200px;top:374px;width:17px;height:17px;border:1px solid #7a7a7a;background:linear-gradient(#f4f4f4 0%,#eeeeee 45%,#d9d9d9 50%,#d2d2d2 100%);box-shadow:inset 0 0 0 1px #fbfbfb"></div>
<svg class="a" style="left:205px;top:381px" width="7" height="5" viewBox="0 0 7 5"><path d="M0 0H7L3.5 4.5Z" fill="#000"/></svg>
<div class="a" style="left:9px;top:392px;width:208px;height:1px;background-image:linear-gradient(90deg,#a0a0a0 50%,transparent 50%);background-size:2px 1px"></div>
<div class="t" style="left:38.60px;top:396.69px;font-size:11px;line-height:11px;font-weight:400;color:#000;transform:scaleX(0.9660);transform-origin:0 0;">Date Last Modified</div>
<div class="a" style="left:135px;top:392px;width:1px;height:19px;background:#a0a0a0"></div>
<div class="a" style="left:200px;top:393px;width:17px;height:17px;border:1px solid #7a7a7a;background:linear-gradient(#f4f4f4 0%,#eeeeee 45%,#d9d9d9 50%,#d2d2d2 100%);box-shadow:inset 0 0 0 1px #fbfbfb"></div>
<svg class="a" style="left:205px;top:400px" width="7" height="5" viewBox="0 0 7 5"><path d="M0 0H7L3.5 4.5Z" fill="#000"/></svg>
<div class="a" style="left:9px;top:411px;width:208px;height:1px;background-image:linear-gradient(90deg,#a0a0a0 50%,transparent 50%);background-size:2px 1px"></div>
<div class="t" style="left:38.60px;top:415.69px;font-size:11px;line-height:11px;font-weight:400;color:#000;transform:scaleX(0.9699);transform-origin:0 0;">Date Started</div>
<div class="a" style="left:135px;top:411px;width:1px;height:19px;background:#a0a0a0"></div>
<div class="a" style="left:200px;top:412px;width:17px;height:17px;border:1px solid #7a7a7a;background:linear-gradient(#f4f4f4 0%,#eeeeee 45%,#d9d9d9 50%,#d2d2d2 100%);box-shadow:inset 0 0 0 1px #fbfbfb"></div>
<svg class="a" style="left:205px;top:419px" width="7" height="5" viewBox="0 0 7 5"><path d="M0 0H7L3.5 4.5Z" fill="#000"/></svg>
<div class="a" style="left:9px;top:430px;width:208px;height:1px;background-image:linear-gradient(90deg,#a0a0a0 50%,transparent 50%);background-size:2px 1px"></div>
<div class="t" style="left:38.60px;top:434.69px;font-size:11px;line-height:11px;font-weight:400;color:#000;transform:scaleX(0.9498);transform-origin:0 0;">Date Completed</div>
<div class="a" style="left:135px;top:430px;width:1px;height:19px;background:#a0a0a0"></div>
<div class="a" style="left:200px;top:431px;width:17px;height:17px;border:1px solid #7a7a7a;background:linear-gradient(#f4f4f4 0%,#eeeeee 45%,#d9d9d9 50%,#d2d2d2 100%);box-shadow:inset 0 0 0 1px #fbfbfb"></div>
<svg class="a" style="left:205px;top:438px" width="7" height="5" viewBox="0 0 7 5"><path d="M0 0H7L3.5 4.5Z" fill="#000"/></svg>
<div class="a" style="left:9px;top:449px;width:208px;height:1px;background-image:linear-gradient(90deg,#a0a0a0 50%,transparent 50%);background-size:2px 1px"></div>
<div class="a" style="left:11px;top:454px;width:9px;height:9px;border:1px solid #8c96a4;border-radius:1px;background:linear-gradient(#ffffff,#dfe3ea)"></div>
<div class="a" style="left:13px;top:458px;width:5px;height:1px;background:#2e3e5e"></div>
<div class="t" style="left:25.70px;top:453.69px;font-size:11px;line-height:11px;font-weight:700;color:#000;transform:scaleX(1.0602);transform-origin:0 0;">By Resource</div>
<div class="a" style="left:8px;top:467px;width:209px;height:2px;background:#7a7a7a"></div>
<div class="a" style="left:8px;top:469px;width:2px;height:18px;background:#7a7a7a"></div>
<div class="a" style="left:136px;top:469px;width:81px;height:18px;background:#ffffff"></div>
<div class="a" style="left:8px;top:486px;width:128px;height:1px;background:#ffffff"></div>
<div class="t" style="left:38.60px;top:472.69px;font-size:11px;line-height:11px;font-weight:400;color:#000;transform:scaleX(0.9445);transform-origin:0 0;">Owner</div>
<div class="a" style="left:135px;top:468px;width:1px;height:19px;background:#a0a0a0"></div>
<div class="a" style="left:199px;top:469px;width:17px;height:17px;border:1px solid #7a7a7a;background:linear-gradient(#f4f4f4 0%,#eeeeee 45%,#d9d9d9 50%,#d2d2d2 100%);box-shadow:inset 0 0 0 1px #fbfbfb"></div>
<svg class="a" style="left:204px;top:476px" width="7" height="5" viewBox="0 0 7 5"><path d="M0 0H7L3.5 4.5Z" fill="#000"/></svg>
<div class="t" style="left:38.60px;top:491.69px;font-size:11px;line-height:11px;font-weight:400;color:#000;transform:scaleX(0.9448);transform-origin:0 0;">Assignment</div>
<div class="a" style="left:135px;top:487px;width:1px;height:19px;background:#a0a0a0"></div>
<div class="a" style="left:200px;top:488px;width:17px;height:17px;border:1px solid #7a7a7a;background:linear-gradient(#f4f4f4 0%,#eeeeee 45%,#d9d9d9 50%,#d2d2d2 100%);box-shadow:inset 0 0 0 1px #fbfbfb"></div>
<svg class="a" style="left:205px;top:495px" width="7" height="5" viewBox="0 0 7 5"><path d="M0 0H7L3.5 4.5Z" fill="#000"/></svg>
<div class="a" style="left:9px;top:506px;width:208px;height:1px;background-image:linear-gradient(90deg,#a0a0a0 50%,transparent 50%);background-size:2px 1px"></div>
<div class="t" style="left:38.60px;top:510.69px;font-size:11px;line-height:11px;font-weight:400;color:#000;transform:scaleX(0.9483);transform-origin:0 0;">Department</div>
<div class="a" style="left:135px;top:506px;width:1px;height:19px;background:#a0a0a0"></div>
<div class="a" style="left:200px;top:507px;width:17px;height:17px;border:1px solid #7a7a7a;background:linear-gradient(#f4f4f4 0%,#eeeeee 45%,#d9d9d9 50%,#d2d2d2 100%);box-shadow:inset 0 0 0 1px #fbfbfb"></div>
<svg class="a" style="left:205px;top:514px" width="7" height="5" viewBox="0 0 7 5"><path d="M0 0H7L3.5 4.5Z" fill="#000"/></svg>
<div class="a" style="left:9px;top:525px;width:208px;height:1px;background-image:linear-gradient(90deg,#a0a0a0 50%,transparent 50%);background-size:2px 1px"></div>
<div class="t" style="left:25.70px;top:529.69px;font-size:11px;line-height:11px;font-weight:700;color:#000;transform:scaleX(1.0200);transform-origin:0 0;">Custom Fields</div>
<div class="a" style="left:8px;top:544px;width:209px;height:1px;background:#a0a0a0"></div>
<div class="a" style="left:222px;top:108px;width:1058px;height:894px;background:#fbfbfb"></div>
<div class="a" style="left:222px;top:108px;width:1055px;height:2px;background:#fbfbfb"></div>
<div class="a" style="left:222px;top:110px;width:1051px;height:1px;background:#e4e4e4"></div>
<div class="a" style="left:222px;top:111px;width:1051px;height:38px;background:#fafafa"></div>
<div class="a" style="left:224px;top:112px;width:1048px;height:37px;background:#a0a0a0"></div>
<div class="a" style="left:229px;top:118px;width:12px;height:12px;border:1px solid #f6f6f6;background:linear-gradient(135deg,#bdbdbd,#f4f4f4)"></div>
<div class="t" style="left:243.50px;top:116.84px;font-size:12px;line-height:12px;font-weight:400;color:#f4f4f4;transform:scaleX(0.9409);transform-origin:0 0;-webkit-text-stroke:0;">Current filter:</div>
<div class="t" style="left:368.40px;top:116.84px;font-size:12px;line-height:12px;font-weight:400;color:#f4f4f4;transform:scaleX(0.9052);transform-origin:0 0;-webkit-text-stroke:0;">(Task Group  ("Improve" Phase,Conduct design of experiments,Implement corrective action))</div>
<div class="a" style="left:222px;top:149px;width:1051px;height:4px;background:#f0f0f0"></div>
<div class="a" style="left:1277px;top:68px;width:1px;height:934px;background:#8c8c8c"></div>
<div class="a" style="left:222px;top:153px;width:1052px;height:847px;background:#ffffff"></div>
<div class="a" style="left:222px;top:153px;width:1052px;height:1px;background:#8e8e8e"></div>
<div class="a" style="left:1273px;top:153px;width:1px;height:847px;background:#8e8e8e"></div>
<div class="a" style="left:223px;top:154px;width:1050px;height:16px;background:linear-gradient(#ffffff 0%,#ffffff 36%,#f2f2f4 40%,#eff0f2 100%)"></div>
<div class="a" style="left:223px;top:169px;width:1050px;height:1px;background:#cbccd0"></div>
<div class="a" style="left:223px;top:170px;width:1050px;height:1px;background:#f4fbfb"></div>
<div class="a" style="left:730px;top:155px;width:1px;height:14px;background:#e0e0e4"></div>
<div class="t" style="left:453.75px;top:157.69px;font-size:11px;line-height:11px;font-weight:400;color:#111;transform:scaleX(0.8946);transform-origin:0 0;">Name</div>
<div class="a" style="left:796px;top:155px;width:1px;height:14px;background:#e0e0e4"></div>
<div class="t" style="left:757.38px;top:157.69px;font-size:11px;line-height:11px;font-weight:400;color:#111;transform:scaleX(1.0227);transform-origin:0 0;">ID</div>
<div class="a" style="left:891px;top:155px;width:1px;height:14px;background:#e0e0e4"></div>
<div class="t" style="left:834.50px;top:157.69px;font-size:11px;line-height:11px;font-weight:400;color:#111;transform:scaleX(0.9811);transform-origin:0 0;">Info</div>
<div class="a" style="left:966px;top:155px;width:1px;height:14px;background:#e0e0e4"></div>
<div class="t" style="left:913.40px;top:157.69px;font-size:11px;line-height:11px;font-weight:400;color:#111;transform:scaleX(0.9684);transform-origin:0 0;">Status</div>
<div class="a" style="left:1041px;top:155px;width:1px;height:14px;background:#e0e0e4"></div>
<div class="t" style="left:981.50px;top:157.69px;font-size:11px;line-height:11px;font-weight:400;color:#111;transform:scaleX(0.9346);transform-origin:0 0;">Complete</div>
<div class="a" style="left:1117px;top:155px;width:1px;height:14px;background:#e0e0e4"></div>
<div class="t" style="left:1062.05px;top:157.69px;font-size:11px;line-height:11px;font-weight:400;color:#111;transform:scaleX(0.9905);transform-origin:0 0;">Priority</div>
<div class="a" style="left:1198px;top:155px;width:1px;height:14px;background:#e0e0e4"></div>
<div class="t" style="left:1135.15px;top:157.69px;font-size:11px;line-height:11px;font-weight:400;color:#111;transform:scaleX(0.9619);transform-origin:0 0;">Due Date</div>
<div class="a" style="left:1272px;top:155px;width:1px;height:14px;background:#e0e0e4"></div>
<div class="t" style="left:1213.65px;top:157.69px;font-size:11px;line-height:11px;font-weight:400;color:#111;transform:scaleX(0.9436);transform-origin:0 0;">Assigned</div>
<svg class="a" style="left:718px;top:158px" width="8" height="8" viewBox="0 0 8 8"><path d="M3.5 0.8L6.8 7H0.5Z" fill="none" stroke="#6a6a6a" stroke-width="1"/></svg>
<div class="a" style="left:250px;top:184px;width:1px;height:452px;background-image:linear-gradient(#a0a0a0 50%,transparent 50%);background-size:1px 2px"></div>
<div class="a" style="left:269px;top:242px;width:1px;height:266px;background-image:linear-gradient(#a0a0a0 50%,transparent 50%);background-size:1px 2px"></div>
<div class="a" style="left:288px;top:261px;width:1px;height:228px;background-image:linear-gradient(#a0a0a0 50%,transparent 50%);background-size:1px 2px"></div>
<div class="a" style="left:288px;top:508px;width:1px;height:114px;background-image:linear-gradient(#a0a0a0 50%,transparent 50%);background-size:1px 2px"></div>
<div class="a" style="left:260px;top:171px;width:1012px;height:18px;background:#c6f9fa"></div>
<div class="a" style="left:260px;top:189px;width:1012px;height:1px;background:#8eaaaa"></div>
<div class="a" style="left:730px;top:171px;width:1px;height:19px;background:#8eaaaa"></div>
<div class="a" style="left:796px;top:171px;width:1px;height:19px;background:#8eaaaa"></div>
<div class="a" style="left:891px;top:171px;width:1px;height:19px;background:#8eaaaa"></div>
<div class="a" style="left:966px;top:171px;width:1px;height:19px;background:#8eaaaa"></div>
<div class="a" style="left:1041px;top:171px;width:1px;height:19px;background:#8eaaaa"></div>
<div class="a" style="left:1117px;top:171px;width:1px;height:19px;background:#8eaaaa"></div>
<div class="a" style="left:1198px;top:171px;width:1px;height:19px;background:#8eaaaa"></div>
<div class="a" style="left:260px;top:171px;width:1px;height:19px;background:#8eaaaa"></div>
<div class="a" style="left:1272px;top:171px;width:1px;height:19px;background:#8eaaaa"></div>
<div class="t" style="left:263.00px;top:174.69px;font-size:11px;line-height:11px;font-weight:400;color:#000;transform:scaleX(0.9462);transform-origin:0 0;">Six Sigma demo database</div>
<div class="t" style="left:993.60px;top:174.69px;font-size:11px;line-height:11px;font-weight:400;color:#000;transform:scaleX(1.0552);transform-origin:0 0;">0 %</div>
<div class="a" style="left:227px;top:175px;width:9px;height:9px;border:1px solid #8c96a4;border-radius:1px;background:linear-gradient(#ffffff 0%,#f4f6f9 50%,#dfe3ea 100%)"></div>
<div class="a" style="left:229px;top:179px;width:5px;height:1px;background:#34446a"></div>
<div class="a" style="left:236px;top:179px;width:11px;height:1px;background-image:linear-gradient(90deg,#a0a0a0 50%,transparent 50%);background-size:2px 1px"></div>
<svg class="a" style="left:244px;top:171px" width="14" height="12"><use href="#folder"/></svg>
<svg class="a" style="left:240px;top:176px" width="13" height="13"><use href="#smclk"/></svg>
<div class="a" style="left:279px;top:190px;width:993px;height:18px;background:#c6f9fa"></div>
<div class="a" style="left:279px;top:208px;width:993px;height:1px;background:#8eaaaa"></div>
<div class="a" style="left:730px;top:190px;width:1px;height:19px;background:#8eaaaa"></div>
<div class="a" style="left:796px;top:190px;width:1px;height:19px;background:#8eaaaa"></div>
<div class="a" style="left:891px;top:190px;width:1px;height:19px;background:#8eaaaa"></div>
<div class="a" style="left:966px;top:190px;width:1px;height:19px;background:#8eaaaa"></div>
<div class="a" style="left:1041px;top:190px;width:1px;height:19px;background:#8eaaaa"></div>
<div class="a" style="left:1117px;top:190px;width:1px;height:19px;background:#8eaaaa"></div>
<div class="a" style="left:1198px;top:190px;width:1px;height:19px;background:#8eaaaa"></div>
<div class="a" style="left:279px;top:190px;width:1px;height:19px;background:#8eaaaa"></div>
<div class="a" style="left:1272px;top:190px;width:1px;height:19px;background:#8eaaaa"></div>
<div class="t" style="left:282.00px;top:193.69px;font-size:11px;line-height:11px;font-weight:400;color:#000;transform:scaleX(0.9397);transform-origin:0 0;">"Define" Phase</div>
<div class="t" style="left:993.60px;top:193.69px;font-size:11px;line-height:11px;font-weight:400;color:#000;transform:scaleX(1.0552);transform-origin:0 0;">0 %</div>
<div class="a" style="left:246px;top:194px;width:9px;height:9px;border:1px solid #8c96a4;border-radius:1px;background:linear-gradient(#ffffff 0%,#f4f6f9 50%,#dfe3ea 100%)"></div>
<div class="a" style="left:248px;top:198px;width:5px;height:1px;background:#34446a"></div>
<div class="a" style="left:250px;top:196px;width:1px;height:5px;background:#34446a"></div>
<div class="a" style="left:255px;top:198px;width:11px;height:1px;background-image:linear-gradient(90deg,#a0a0a0 50%,transparent 50%);background-size:2px 1px"></div>
<svg class="a" style="left:263px;top:190px" width="14" height="12"><use href="#folder"/></svg>
<svg class="a" style="left:259px;top:195px" width="13" height="13"><use href="#smclk"/></svg>
<div class="a" style="left:279px;top:209px;width:993px;height:18px;background:#c6f9fa"></div>
<div class="a" style="left:279px;top:227px;width:993px;height:1px;background:#8eaaaa"></div>
<div class="a" style="left:730px;top:209px;width:1px;height:19px;background:#8eaaaa"></div>
<div class="a" style="left:796px;top:209px;width:1px;height:19px;background:#8eaaaa"></div>
<div class="a" style="left:891px;top:209px;width:1px;height:19px;background:#8eaaaa"></div>
<div class="a" style="left:966px;top:209px;width:1px;height:19px;background:#8eaaaa"></div>
<div class="a" style="left:1041px;top:209px;width:1px;height:19px;background:#8eaaaa"></div>
<div class="a" style="left:1117px;top:209px;width:1px;height:19px;background:#8eaaaa"></div>
<div class="a" style="left:1198px;top:209px;width:1px;height:19px;background:#8eaaaa"></div>
<div class="a" style="left:279px;top:209px;width:1px;height:19px;background:#8eaaaa"></div>
<div class="a" style="left:1272px;top:209px;width:1px;height:19px;background:#8eaaaa"></div>
<div class="t" style="left:282.00px;top:212.69px;font-size:11px;line-height:11px;font-weight:400;color:#000;transform:scaleX(0.9369);transform-origin:0 0;">"Measure" Phase</div>
<div class="t" style="left:993.60px;top:212.69px;font-size:11px;line-height:11px;font-weight:400;color:#000;transform:scaleX(1.0552);transform-origin:0 0;">0 %</div>
<div class="a" style="left:246px;top:213px;width:9px;height:9px;border:1px solid #8c96a4;border-radius:1px;background:linear-gradient(#ffffff 0%,#f4f6f9 50%,#dfe3ea 100%)"></div>
<div class="a" style="left:248px;top:217px;width:5px;height:1px;background:#34446a"></div>
<div class="a" style="left:250px;top:215px;width:1px;height:5px;background:#34446a"></div>
<div class="a" style="left:255px;top:217px;width:11px;height:1px;background-image:linear-gradient(90deg,#a0a0a0 50%,transparent 50%);background-size:2px 1px"></div>
<svg class="a" style="left:263px;top:209px" width="14" height="12"><use href="#folder"/></svg>
<svg class="a" style="left:259px;top:214px" width="13" height="13"><use href="#smclk"/></svg>
<div class="a" style="left:279px;top:228px;width:993px;height:18px;background:#c6f9fa"></div>
<div class="a" style="left:279px;top:246px;width:993px;height:1px;background:#8eaaaa"></div>
<div class="a" style="left:730px;top:228px;width:1px;height:19px;background:#8eaaaa"></div>
<div class="a" style="left:796px;top:228px;width:1px;height:19px;background:#8eaaaa"></div>
<div class="a" style="left:891px;top:228px;width:1px;height:19px;background:#8eaaaa"></div>
<div class="a" style="left:966px;top:228px;width:1px;height:19px;background:#8eaaaa"></div>
<div class="a" style="left:1041px;top:228px;width:1px;height:19px;background:#8eaaaa"></div>
<div class="a" style="left:1117px;top:228px;width:1px;height:19px;background:#8eaaaa"></div>
<div class="a" style="left:1198px;top:228px;width:1px;height:19px;background:#8eaaaa"></div>
<div class="a" style="left:279px;top:228px;width:1px;height:19px;background:#8eaaaa"></div>
<div class="a" style="left:1272px;top:228px;width:1px;height:19px;background:#8eaaaa"></div>
<div class="t" style="left:282.00px;top:231.69px;font-size:11px;line-height:11px;font-weight:700;color:#000;transform:scaleX(1.0937);transform-origin:0 0;">"Improve" Phase</div>
<div class="t" style="left:993.60px;top:231.69px;font-size:11px;line-height:11px;font-weight:700;color:#000;transform:scaleX(1.0552);transform-origin:0 0;">0 %</div>
<div class="a" style="left:246px;top:232px;width:9px;height:9px;border:1px solid #8c96a4;border-radius:1px;background:linear-gradient(#ffffff 0%,#f4f6f9 50%,#dfe3ea 100%)"></div>
<div class="a" style="left:248px;top:236px;width:5px;height:1px;background:#34446a"></div>
<div class="a" style="left:255px;top:236px;width:5px;height:1px;background-image:linear-gradient(90deg,#a0a0a0 50%,transparent 50%);background-size:2px 1px"></div>
<svg class="a" style="left:259px;top:229px" width="18" height="17"><use href="#funnel_tree"/></svg>
<div class="a" style="left:298px;top:247px;width:974px;height:18px;background:#c6f9fa"></div>
<div class="a" style="left:298px;top:265px;width:974px;height:1px;background:#8eaaaa"></div>
<div class="a" style="left:730px;top:247px;width:1px;height:19px;background:#8eaaaa"></div>
<div class="a" style="left:796px;top:247px;width:1px;height:19px;background:#8eaaaa"></div>
<div class="a" style="left:891px;top:247px;width:1px;height:19px;background:#8eaaaa"></div>
<div class="a" style="left:966px;top:247px;width:1px;height:19px;background:#8eaaaa"></div>
<div class="a" style="left:1041px;top:247px;width:1px;height:19px;background:#8eaaaa"></div>
<div class="a" style="left:1117px;top:247px;width:1px;height:19px;background:#8eaaaa"></div>
<div class="a" style="left:1198px;top:247px;width:1px;height:19px;background:#8eaaaa"></div>
<div class="a" style="left:298px;top:247px;width:1px;height:19px;background:#8eaaaa"></div>
<div class="a" style="left:1272px;top:247px;width:1px;height:19px;background:#8eaaaa"></div>
<div class="t" style="left:301.00px;top:250.69px;font-size:11px;line-height:11px;font-weight:700;color:#000;transform:scaleX(1.0644);transform-origin:0 0;">Conduct design of experiments</div>
<div class="t" style="left:993.60px;top:250.69px;font-size:11px;line-height:11px;font-weight:700;color:#000;transform:scaleX(1.0552);transform-origin:0 0;">0 %</div>
<div class="a" style="left:265px;top:251px;width:9px;height:9px;border:1px solid #8c96a4;border-radius:1px;background:linear-gradient(#ffffff 0%,#f4f6f9 50%,#dfe3ea 100%)"></div>
<div class="a" style="left:267px;top:255px;width:5px;height:1px;background:#34446a"></div>
<div class="a" style="left:274px;top:255px;width:5px;height:1px;background-image:linear-gradient(90deg,#a0a0a0 50%,transparent 50%);background-size:2px 1px"></div>
<svg class="a" style="left:278px;top:248px" width="18" height="17"><use href="#funnel_tree"/></svg>
<div class="a" style="left:318px;top:266px;width:954px;height:19px;background:#3399ff"></div>
<div class="a" style="left:730px;top:267px;width:1px;height:17px;background:#86b2de"></div>
<div class="a" style="left:796px;top:267px;width:1px;height:17px;background:#86b2de"></div>
<div class="a" style="left:891px;top:267px;width:1px;height:17px;background:#86b2de"></div>
<div class="a" style="left:966px;top:267px;width:1px;height:17px;background:#86b2de"></div>
<div class="a" style="left:1041px;top:267px;width:1px;height:17px;background:#86b2de"></div>
<div class="a" style="left:1117px;top:267px;width:1px;height:17px;background:#86b2de"></div>
<div class="a" style="left:1198px;top:267px;width:1px;height:17px;background:#86b2de"></div>
<div class="a" style="left:317px;top:266px;width:1px;height:19px;background:#a0a0a0"></div>
<div class="a" style="left:1272px;top:266px;width:1px;height:19px;background:#a0a0a0"></div>
<div class="a" style="left:318px;top:266px;width:954px;height:19px;border:1px dotted #1e5c96"></div>
<div class="t" style="left:319.00px;top:269.69px;font-size:11px;line-height:11px;font-weight:400;color:#fff;transform:scaleX(0.9781);transform-origin:0 0;">Brainstorm the experiments during team meetings</div>
<div class="t" style="left:993.60px;top:269.69px;font-size:11px;line-height:11px;font-weight:400;color:#fff;transform:scaleX(1.0552);transform-origin:0 0;">0 %</div>
<svg class="a" style="left:1044px;top:267px" width="17" height="17"><use href="#ball"/></svg>
<div class="t" style="left:1064.50px;top:269.69px;font-size:11px;line-height:11px;font-weight:400;color:#fff;transform:scaleX(0.9450);transform-origin:0 0;">Normal</div>
<div class="a" style="left:289px;top:274px;width:9px;height:1px;background-image:linear-gradient(90deg,#a0a0a0 50%,transparent 50%);background-size:2px 1px"></div>
<svg class="a" style="left:303px;top:267px" width="12" height="15"><use href="#paper"/></svg>
<svg class="a" style="left:297px;top:271px" width="13" height="13"><use href="#smclk"/></svg>
<div class="a" style="left:317px;top:303px;width:955px;height:1px;background:#a0a0a0"></div>
<div class="a" style="left:730px;top:285px;width:1px;height:19px;background:#a0a0a0"></div>
<div class="a" style="left:796px;top:285px;width:1px;height:19px;background:#a0a0a0"></div>
<div class="a" style="left:891px;top:285px;width:1px;height:19px;background:#a0a0a0"></div>
<div class="a" style="left:966px;top:285px;width:1px;height:19px;background:#a0a0a0"></div>
<div class="a" style="left:1041px;top:285px;width:1px;height:19px;background:#a0a0a0"></div>
<div class="a" style="left:1117px;top:285px;width:1px;height:19px;background:#a0a0a0"></div>
<div class="a" style="left:1198px;top:285px;width:1px;height:19px;background:#a0a0a0"></div>
<div class="a" style="left:317px;top:285px;width:1px;height:19px;background:#a0a0a0"></div>
<div class="a" style="left:1272px;top:285px;width:1px;height:19px;background:#a0a0a0"></div>
<div class="t" style="left:319.00px;top:288.69px;font-size:11px;line-height:11px;font-weight:400;color:#000;transform:scaleX(0.9874);transform-origin:0 0;">Collect and analyze data during every experiment.</div>
<div class="t" style="left:993.60px;top:288.69px;font-size:11px;line-height:11px;font-weight:400;color:#000;transform:scaleX(1.0552);transform-origin:0 0;">0 %</div>
<svg class="a" style="left:1044px;top:286px" width="17" height="17"><use href="#ball"/></svg>
<div class="t" style="left:1064.50px;top:288.69px;font-size:11px;line-height:11px;font-weight:400;color:#000;transform:scaleX(0.9450);transform-origin:0 0;">Normal</div>
<div class="a" style="left:289px;top:293px;width:9px;height:1px;background-image:linear-gradient(90deg,#a0a0a0 50%,transparent 50%);background-size:2px 1px"></div>
<svg class="a" style="left:303px;top:286px" width="12" height="15"><use href="#paper"/></svg>
<svg class="a" style="left:297px;top:290px" width="13" height="13"><use href="#smclk"/></svg>
<div class="a" style="left:317px;top:322px;width:955px;height:1px;background:#a0a0a0"></div>
<div class="a" style="left:730px;top:304px;width:1px;height:19px;background:#a0a0a0"></div>
<div class="a" style="left:796px;top:304px;width:1px;height:19px;background:#a0a0a0"></div>
<div class="a" style="left:891px;top:304px;width:1px;height:19px;background:#a0a0a0"></div>
<div class="a" style="left:966px;top:304px;width:1px;height:19px;background:#a0a0a0"></div>
<div class="a" style="left:1041px;top:304px;width:1px;height:19px;background:#a0a0a0"></div>
<div class="a" style="left:1117px;top:304px;width:1px;height:19px;background:#a0a0a0"></div>
<div class="a" style="left:1198px;top:304px;width:1px;height:19px;background:#a0a0a0"></div>
<div class="a" style="left:317px;top:304px;width:1px;height:19px;background:#a0a0a0"></div>
<div class="a" style="left:1272px;top:304px;width:1px;height:19px;background:#a0a0a0"></div>
<div class="t" style="left:319.00px;top:307.69px;font-size:11px;line-height:11px;font-weight:400;color:#000;transform:scaleX(0.9928);transform-origin:0 0;">Define the aspects for each experiment</div>
<div class="t" style="left:993.60px;top:307.69px;font-size:11px;line-height:11px;font-weight:400;color:#000;transform:scaleX(1.0552);transform-origin:0 0;">0 %</div>
<svg class="a" style="left:1044px;top:305px" width="17" height="17"><use href="#ball"/></svg>
<div class="t" style="left:1064.50px;top:307.69px;font-size:11px;line-height:11px;font-weight:400;color:#000;transform:scaleX(0.9450);transform-origin:0 0;">Normal</div>
<div class="a" style="left:289px;top:312px;width:9px;height:1px;background-image:linear-gradient(90deg,#a0a0a0 50%,transparent 50%);background-size:2px 1px"></div>
<svg class="a" style="left:303px;top:305px" width="12" height="15"><use href="#paper"/></svg>
<svg class="a" style="left:297px;top:309px" width="13" height="13"><use href="#smclk"/></svg>
<div class="a" style="left:317px;top:341px;width:955px;height:1px;background:#a0a0a0"></div>
<div class="a" style="left:730px;top:323px;width:1px;height:19px;background:#a0a0a0"></div>
<div class="a" style="left:796px;top:323px;width:1px;height:19px;background:#a0a0a0"></div>
<div class="a" style="left:891px;top:323px;width:1px;height:19px;background:#a0a0a0"></div>
<div class="a" style="left:966px;top:323px;width:1px;height:19px;background:#a0a0a0"></div>
<div class="a" style="left:1041px;top:323px;width:1px;height:19px;background:#a0a0a0"></div>
<div class="a" style="left:1117px;top:323px;width:1px;height:19px;background:#a0a0a0"></div>
<div class="a" style="left:1198px;top:323px;width:1px;height:19px;background:#a0a0a0"></div>
<div class="a" style="left:317px;top:323px;width:1px;height:19px;background:#a0a0a0"></div>
<div class="a" style="left:1272px;top:323px;width:1px;height:19px;background:#a0a0a0"></div>
<div class="t" style="left:319.00px;top:326.69px;font-size:11px;line-height:11px;font-weight:400;color:#000;transform:scaleX(0.9709);transform-origin:0 0;">Define the problem to be addressed by DOEs</div>
<div class="t" style="left:993.60px;top:326.69px;font-size:11px;line-height:11px;font-weight:400;color:#000;transform:scaleX(1.0552);transform-origin:0 0;">0 %</div>
<svg class="a" style="left:1044px;top:324px" width="17" height="17"><use href="#ball"/></svg>
<div class="t" style="left:1064.50px;top:326.69px;font-size:11px;line-height:11px;font-weight:400;color:#000;transform:scaleX(0.9450);transform-origin:0 0;">Normal</div>
<div class="a" style="left:289px;top:331px;width:9px;height:1px;background-image:linear-gradient(90deg,#a0a0a0 50%,transparent 50%);background-size:2px 1px"></div>
<svg class="a" style="left:303px;top:324px" width="12" height="15"><use href="#paper"/></svg>
<svg class="a" style="left:297px;top:328px" width="13" height="13"><use href="#smclk"/></svg>
<div class="a" style="left:317px;top:360px;width:955px;height:1px;background:#a0a0a0"></div>
<div class="a" style="left:730px;top:342px;width:1px;height:19px;background:#a0a0a0"></div>
<div class="a" style="left:796px;top:342px;width:1px;height:19px;background:#a0a0a0"></div>
<div class="a" style="left:891px;top:342px;width:1px;height:19px;background:#a0a0a0"></div>
<div class="a" style="left:966px;top:342px;width:1px;height:19px;background:#a0a0a0"></div>
<div class="a" style="left:1041px;top:342px;width:1px;height:19px;background:#a0a0a0"></div>
<div class="a" style="left:1117px;top:342px;width:1px;height:19px;background:#a0a0a0"></div>
<div class="a" style="left:1198px;top:342px;width:1px;height:19px;background:#a0a0a0"></div>
<div class="a" style="left:317px;top:342px;width:1px;height:19px;background:#a0a0a0"></div>
<div class="a" style="left:1272px;top:342px;width:1px;height:19px;background:#a0a0a0"></div>
<div class="t" style="left:319.00px;top:345.69px;font-size:11px;line-height:11px;font-weight:400;color:#000;transform:scaleX(0.9834);transform-origin:0 0;">Develop a design for each experiment</div>
<div class="t" style="left:993.60px;top:345.69px;font-size:11px;line-height:11px;font-weight:400;color:#000;transform:scaleX(1.0552);transform-origin:0 0;">0 %</div>
<svg class="a" style="left:1044px;top:343px" width="17" height="17"><use href="#ball"/></svg>
<div class="t" style="left:1064.50px;top:345.69px;font-size:11px;line-height:11px;font-weight:400;color:#000;transform:scaleX(0.9450);transform-origin:0 0;">Normal</div>
<div class="a" style="left:289px;top:350px;width:9px;height:1px;background-image:linear-gradient(90deg,#a0a0a0 50%,transparent 50%);background-size:2px 1px"></div>
<svg class="a" style="left:303px;top:343px" width="12" height="15"><use href="#paper"/></svg>
<svg class="a" style="left:297px;top:347px" width="13" height="13"><use href="#smclk"/></svg>
<div class="a" style="left:317px;top:379px;width:955px;height:1px;background:#a0a0a0"></div>
<div class="a" style="left:730px;top:361px;width:1px;height:19px;background:#a0a0a0"></div>
<div class="a" style="left:796px;top:361px;width:1px;height:19px;background:#a0a0a0"></div>
<div class="a" style="left:891px;top:361px;width:1px;height:19px;background:#a0a0a0"></div>
<div class="a" style="left:966px;top:361px;width:1px;height:19px;background:#a0a0a0"></div>
<div class="a" style="left:1041px;top:361px;width:1px;height:19px;background:#a0a0a0"></div>
<div class="a" style="left:1117px;top:361px;width:1px;height:19px;background:#a0a0a0"></div>
<div class="a" style="left:1198px;top:361px;width:1px;height:19px;background:#a0a0a0"></div>
<div class="a" style="left:317px;top:361px;width:1px;height:19px;background:#a0a0a0"></div>
<div class="a" style="left:1272px;top:361px;width:1px;height:19px;background:#a0a0a0"></div>
<div class="t" style="left:319.00px;top:364.69px;font-size:11px;line-height:11px;font-weight:400;color:#000;transform:scaleX(0.9870);transform-origin:0 0;">Document a report on results</div>
<div class="t" style="left:993.60px;top:364.69px;font-size:11px;line-height:11px;font-weight:400;color:#000;transform:scaleX(1.0552);transform-origin:0 0;">0 %</div>
<svg class="a" style="left:1044px;top:362px" width="17" height="17"><use href="#ball"/></svg>
<div class="t" style="left:1064.50px;top:364.69px;font-size:11px;line-height:11px;font-weight:400;color:#000;transform:scaleX(0.9450);transform-origin:0 0;">Normal</div>
<div class="a" style="left:289px;top:369px;width:9px;height:1px;background-image:linear-gradient(90deg,#a0a0a0 50%,transparent 50%);background-size:2px 1px"></div>
<svg class="a" style="left:303px;top:362px" width="12" height="15"><use href="#paper"/></svg>
<svg class="a" style="left:297px;top:366px" width="13" height="13"><use href="#smclk"/></svg>
<div class="a" style="left:317px;top:398px;width:955px;height:1px;background:#a0a0a0"></div>
<div class="a" style="left:730px;top:380px;width:1px;height:19px;background:#a0a0a0"></div>
<div class="a" style="left:796px;top:380px;width:1px;height:19px;background:#a0a0a0"></div>
<div class="a" style="left:891px;top:380px;width:1px;height:19px;background:#a0a0a0"></div>
<div class="a" style="left:966px;top:380px;width:1px;height:19px;background:#a0a0a0"></div>
<div class="a" style="left:1041px;top:380px;width:1px;height:19px;background:#a0a0a0"></div>
<div class="a" style="left:1117px;top:380px;width:1px;height:19px;background:#a0a0a0"></div>
<div class="a" style="left:1198px;top:380px;width:1px;height:19px;background:#a0a0a0"></div>
<div class="a" style="left:317px;top:380px;width:1px;height:19px;background:#a0a0a0"></div>
<div class="a" style="left:1272px;top:380px;width:1px;height:19px;background:#a0a0a0"></div>
<div class="t" style="left:319.00px;top:383.69px;font-size:11px;line-height:11px;font-weight:400;color:#000;transform:scaleX(1.0096);transform-origin:0 0;">Identify the number of experiments</div>
<div class="t" style="left:993.60px;top:383.69px;font-size:11px;line-height:11px;font-weight:400;color:#000;transform:scaleX(1.0552);transform-origin:0 0;">0 %</div>
<svg class="a" style="left:1044px;top:381px" width="17" height="17"><use href="#ball"/></svg>
<div class="t" style="left:1064.50px;top:383.69px;font-size:11px;line-height:11px;font-weight:400;color:#000;transform:scaleX(0.9450);transform-origin:0 0;">Normal</div>
<div class="a" style="left:289px;top:388px;width:9px;height:1px;background-image:linear-gradient(90deg,#a0a0a0 50%,transparent 50%);background-size:2px 1px"></div>
<svg class="a" style="left:303px;top:381px" width="12" height="15"><use href="#paper"/></svg>
<svg class="a" style="left:297px;top:385px" width="13" height="13"><use href="#smclk"/></svg>
<div class="a" style="left:317px;top:417px;width:955px;height:1px;background:#a0a0a0"></div>
<div class="a" style="left:730px;top:399px;width:1px;height:19px;background:#a0a0a0"></div>
<div class="a" style="left:796px;top:399px;width:1px;height:19px;background:#a0a0a0"></div>
<div class="a" style="left:891px;top:399px;width:1px;height:19px;background:#a0a0a0"></div>
<div class="a" style="left:966px;top:399px;width:1px;height:19px;background:#a0a0a0"></div>
<div class="a" style="left:1041px;top:399px;width:1px;height:19px;background:#a0a0a0"></div>
<div class="a" style="left:1117px;top:399px;width:1px;height:19px;background:#a0a0a0"></div>
<div class="a" style="left:1198px;top:399px;width:1px;height:19px;background:#a0a0a0"></div>
<div class="a" style="left:317px;top:399px;width:1px;height:19px;background:#a0a0a0"></div>
<div class="a" style="left:1272px;top:399px;width:1px;height:19px;background:#a0a0a0"></div>
<div class="t" style="left:319.00px;top:402.69px;font-size:11px;line-height:11px;font-weight:400;color:#000;transform:scaleX(1.0178);transform-origin:0 0;">Interpret results of the experiments</div>
<div class="t" style="left:993.60px;top:402.69px;font-size:11px;line-height:11px;font-weight:400;color:#000;transform:scaleX(1.0552);transform-origin:0 0;">0 %</div>
<svg class="a" style="left:1044px;top:400px" width="17" height="17"><use href="#ball"/></svg>
<div class="t" style="left:1064.50px;top:402.69px;font-size:11px;line-height:11px;font-weight:400;color:#000;transform:scaleX(0.9450);transform-origin:0 0;">Normal</div>
<div class="a" style="left:289px;top:407px;width:9px;height:1px;background-image:linear-gradient(90deg,#a0a0a0 50%,transparent 50%);background-size:2px 1px"></div>
<svg class="a" style="left:303px;top:400px" width="12" height="15"><use href="#paper"/></svg>
<svg class="a" style="left:297px;top:404px" width="13" height="13"><use href="#smclk"/></svg>
<div class="a" style="left:317px;top:436px;width:955px;height:1px;background:#a0a0a0"></div>
<div class="a" style="left:730px;top:418px;width:1px;height:19px;background:#a0a0a0"></div>
<div class="a" style="left:796px;top:418px;width:1px;height:19px;background:#a0a0a0"></div>
<div class="a" style="left:891px;top:418px;width:1px;height:19px;background:#a0a0a0"></div>
<div class="a" style="left:966px;top:418px;width:1px;height:19px;background:#a0a0a0"></div>
<div class="a" style="left:1041px;top:418px;width:1px;height:19px;background:#a0a0a0"></div>
<div class="a" style="left:1117px;top:418px;width:1px;height:19px;background:#a0a0a0"></div>
<div class="a" style="left:1198px;top:418px;width:1px;height:19px;background:#a0a0a0"></div>
<div class="a" style="left:317px;top:418px;width:1px;height:19px;background:#a0a0a0"></div>
<div class="a" style="left:1272px;top:418px;width:1px;height:19px;background:#a0a0a0"></div>
<div class="t" style="left:319.00px;top:421.69px;font-size:11px;line-height:11px;font-weight:400;color:#000;transform:scaleX(0.9852);transform-origin:0 0;">Run the experiments</div>
<div class="t" style="left:993.60px;top:421.69px;font-size:11px;line-height:11px;font-weight:400;color:#000;transform:scaleX(1.0552);transform-origin:0 0;">0 %</div>
<svg class="a" style="left:1044px;top:419px" width="17" height="17"><use href="#ball"/></svg>
<div class="t" style="left:1064.50px;top:421.69px;font-size:11px;line-height:11px;font-weight:400;color:#000;transform:scaleX(0.9450);transform-origin:0 0;">Normal</div>
<div class="a" style="left:289px;top:426px;width:9px;height:1px;background-image:linear-gradient(90deg,#a0a0a0 50%,transparent 50%);background-size:2px 1px"></div>
<svg class="a" style="left:303px;top:419px" width="12" height="15"><use href="#paper"/></svg>
<svg class="a" style="left:297px;top:423px" width="13" height="13"><use href="#smclk"/></svg>
<div class="a" style="left:317px;top:455px;width:955px;height:1px;background:#a0a0a0"></div>
<div class="a" style="left:730px;top:437px;width:1px;height:19px;background:#a0a0a0"></div>
<div class="a" style="left:796px;top:437px;width:1px;height:19px;background:#a0a0a0"></div>
<div class="a" style="left:891px;top:437px;width:1px;height:19px;background:#a0a0a0"></div>
<div class="a" style="left:966px;top:437px;width:1px;height:19px;background:#a0a0a0"></div>
<div class="a" style="left:1041px;top:437px;width:1px;height:19px;background:#a0a0a0"></div>
<div class="a" style="left:1117px;top:437px;width:1px;height:19px;background:#a0a0a0"></div>
<div class="a" style="left:1198px;top:437px;width:1px;height:19px;background:#a0a0a0"></div>
<div class="a" style="left:317px;top:437px;width:1px;height:19px;background:#a0a0a0"></div>
<div class="a" style="left:1272px;top:437px;width:1px;height:19px;background:#a0a0a0"></div>
<div class="t" style="left:319.00px;top:440.69px;font-size:11px;line-height:11px;font-weight:400;color:#000;transform:scaleX(0.9950);transform-origin:0 0;">Set up objectives per experiment</div>
<div class="t" style="left:993.60px;top:440.69px;font-size:11px;line-height:11px;font-weight:400;color:#000;transform:scaleX(1.0552);transform-origin:0 0;">0 %</div>
<svg class="a" style="left:1044px;top:438px" width="17" height="17"><use href="#ball"/></svg>
<div class="t" style="left:1064.50px;top:440.69px;font-size:11px;line-height:11px;font-weight:400;color:#000;transform:scaleX(0.9450);transform-origin:0 0;">Normal</div>
<div class="a" style="left:289px;top:445px;width:9px;height:1px;background-image:linear-gradient(90deg,#a0a0a0 50%,transparent 50%);background-size:2px 1px"></div>
<svg class="a" style="left:303px;top:438px" width="12" height="15"><use href="#paper"/></svg>
<svg class="a" style="left:297px;top:442px" width="13" height="13"><use href="#smclk"/></svg>
<div class="a" style="left:317px;top:474px;width:955px;height:1px;background:#a0a0a0"></div>
<div class="a" style="left:730px;top:456px;width:1px;height:19px;background:#a0a0a0"></div>
<div class="a" style="left:796px;top:456px;width:1px;height:19px;background:#a0a0a0"></div>
<div class="a" style="left:891px;top:456px;width:1px;height:19px;background:#a0a0a0"></div>
<div class="a" style="left:966px;top:456px;width:1px;height:19px;background:#a0a0a0"></div>
<div class="a" style="left:1041px;top:456px;width:1px;height:19px;background:#a0a0a0"></div>
<div class="a" style="left:1117px;top:456px;width:1px;height:19px;background:#a0a0a0"></div>
<div class="a" style="left:1198px;top:456px;width:1px;height:19px;background:#a0a0a0"></div>
<div class="a" style="left:317px;top:456px;width:1px;height:19px;background:#a0a0a0"></div>
<div class="a" style="left:1272px;top:456px;width:1px;height:19px;background:#a0a0a0"></div>
<div class="t" style="left:319.00px;top:459.69px;font-size:11px;line-height:11px;font-weight:400;color:#000;transform:scaleX(0.9916);transform-origin:0 0;">Set up time duration per experiment</div>
<div class="t" style="left:993.60px;top:459.69px;font-size:11px;line-height:11px;font-weight:400;color:#000;transform:scaleX(1.0552);transform-origin:0 0;">0 %</div>
<svg class="a" style="left:1044px;top:457px" width="17" height="17"><use href="#ball"/></svg>
<div class="t" style="left:1064.50px;top:459.69px;font-size:11px;line-height:11px;font-weight:400;color:#000;transform:scaleX(0.9450);transform-origin:0 0;">Normal</div>
<div class="a" style="left:289px;top:464px;width:9px;height:1px;background-image:linear-gradient(90deg,#a0a0a0 50%,transparent 50%);background-size:2px 1px"></div>
<svg class="a" style="left:303px;top:457px" width="12" height="15"><use href="#paper"/></svg>
<svg class="a" style="left:297px;top:461px" width="13" height="13"><use href="#smclk"/></svg>
<div class="a" style="left:317px;top:493px;width:955px;height:1px;background:#a0a0a0"></div>
<div class="a" style="left:730px;top:475px;width:1px;height:19px;background:#a0a0a0"></div>
<div class="a" style="left:796px;top:475px;width:1px;height:19px;background:#a0a0a0"></div>
<div class="a" style="left:891px;top:475px;width:1px;height:19px;background:#a0a0a0"></div>
<div class="a" style="left:966px;top:475px;width:1px;height:19px;background:#a0a0a0"></div>
<div class="a" style="left:1041px;top:475px;width:1px;height:19px;background:#a0a0a0"></div>
<div class="a" style="left:1117px;top:475px;width:1px;height:19px;background:#a0a0a0"></div>
<div class="a" style="left:1198px;top:475px;width:1px;height:19px;background:#a0a0a0"></div>
<div class="a" style="left:317px;top:475px;width:1px;height:19px;background:#a0a0a0"></div>
<div class="a" style="left:1272px;top:475px;width:1px;height:19px;background:#a0a0a0"></div>
<div class="t" style="left:319.00px;top:478.69px;font-size:11px;line-height:11px;font-weight:400;color:#000;">Verify results</div>
<div class="t" style="left:993.60px;top:478.69px;font-size:11px;line-height:11px;font-weight:400;color:#000;transform:scaleX(1.0552);transform-origin:0 0;">0 %</div>
<svg class="a" style="left:1044px;top:476px" width="17" height="17"><use href="#ball"/></svg>
<div class="t" style="left:1064.50px;top:478.69px;font-size:11px;line-height:11px;font-weight:400;color:#000;transform:scaleX(0.9450);transform-origin:0 0;">Normal</div>
<div class="a" style="left:289px;top:483px;width:9px;height:1px;background-image:linear-gradient(90deg,#a0a0a0 50%,transparent 50%);background-size:2px 1px"></div>
<svg class="a" style="left:303px;top:476px" width="12" height="15"><use href="#paper"/></svg>
<svg class="a" style="left:297px;top:480px" width="13" height="13"><use href="#smclk"/></svg>
<div class="a" style="left:298px;top:494px;width:974px;height:18px;background:#c6f9fa"></div>
<div class="a" style="left:298px;top:512px;width:974px;height:1px;background:#8eaaaa"></div>
<div class="a" style="left:730px;top:494px;width:1px;height:19px;background:#8eaaaa"></div>
<div class="a" style="left:796px;top:494px;width:1px;height:19px;background:#8eaaaa"></div>
<div class="a" style="left:891px;top:494px;width:1px;height:19px;background:#8eaaaa"></div>
<div class="a" style="left:966px;top:494px;width:1px;height:19px;background:#8eaaaa"></div>
<div class="a" style="left:1041px;top:494px;width:1px;height:19px;background:#8eaaaa"></div>
<div class="a" style="left:1117px;top:494px;width:1px;height:19px;background:#8eaaaa"></div>
<div class="a" style="left:1198px;top:494px;width:1px;height:19px;background:#8eaaaa"></div>
<div class="a" style="left:298px;top:494px;width:1px;height:19px;background:#8eaaaa"></div>
<div class="a" style="left:1272px;top:494px;width:1px;height:19px;background:#8eaaaa"></div>
<div class="t" style="left:301.00px;top:497.69px;font-size:11px;line-height:11px;font-weight:700;color:#000;transform:scaleX(1.1040);transform-origin:0 0;">Implement corrective action</div>
<div class="t" style="left:993.60px;top:497.69px;font-size:11px;line-height:11px;font-weight:700;color:#000;transform:scaleX(1.0552);transform-origin:0 0;">0 %</div>
<div class="a" style="left:265px;top:498px;width:9px;height:9px;border:1px solid #8c96a4;border-radius:1px;background:linear-gradient(#ffffff 0%,#f4f6f9 50%,#dfe3ea 100%)"></div>
<div class="a" style="left:267px;top:502px;width:5px;height:1px;background:#34446a"></div>
<div class="a" style="left:274px;top:502px;width:5px;height:1px;background-image:linear-gradient(90deg,#a0a0a0 50%,transparent 50%);background-size:2px 1px"></div>
<svg class="a" style="left:278px;top:495px" width="18" height="17"><use href="#funnel_tree"/></svg>
<div class="a" style="left:317px;top:531px;width:955px;height:1px;background:#a0a0a0"></div>
<div class="a" style="left:730px;top:513px;width:1px;height:19px;background:#a0a0a0"></div>
<div class="a" style="left:796px;top:513px;width:1px;height:19px;background:#a0a0a0"></div>
<div class="a" style="left:891px;top:513px;width:1px;height:19px;background:#a0a0a0"></div>
<div class="a" style="left:966px;top:513px;width:1px;height:19px;background:#a0a0a0"></div>
<div class="a" style="left:1041px;top:513px;width:1px;height:19px;background:#a0a0a0"></div>
<div class="a" style="left:1117px;top:513px;width:1px;height:19px;background:#a0a0a0"></div>
<div class="a" style="left:1198px;top:513px;width:1px;height:19px;background:#a0a0a0"></div>
<div class="a" style="left:317px;top:513px;width:1px;height:19px;background:#a0a0a0"></div>
<div class="a" style="left:1272px;top:513px;width:1px;height:19px;background:#a0a0a0"></div>
<div class="t" style="left:319.00px;top:516.69px;font-size:11px;line-height:11px;font-weight:400;color:#000;transform:scaleX(0.9920);transform-origin:0 0;">Confirm stability and predictability of the process/system</div>
<div class="t" style="left:993.60px;top:516.69px;font-size:11px;line-height:11px;font-weight:400;color:#000;transform:scaleX(1.0552);transform-origin:0 0;">0 %</div>
<svg class="a" style="left:1044px;top:514px" width="17" height="17"><use href="#ball"/></svg>
<div class="t" style="left:1064.50px;top:516.69px;font-size:11px;line-height:11px;font-weight:400;color:#000;transform:scaleX(0.9450);transform-origin:0 0;">Normal</div>
<div class="a" style="left:289px;top:521px;width:9px;height:1px;background-image:linear-gradient(90deg,#a0a0a0 50%,transparent 50%);background-size:2px 1px"></div>
<svg class="a" style="left:303px;top:514px" width="12" height="15"><use href="#paper"/></svg>
<svg class="a" style="left:297px;top:518px" width="13" height="13"><use href="#smclk"/></svg>
<div class="a" style="left:317px;top:550px;width:955px;height:1px;background:#a0a0a0"></div>
<div class="a" style="left:730px;top:532px;width:1px;height:19px;background:#a0a0a0"></div>
<div class="a" style="left:796px;top:532px;width:1px;height:19px;background:#a0a0a0"></div>
<div class="a" style="left:891px;top:532px;width:1px;height:19px;background:#a0a0a0"></div>
<div class="a" style="left:966px;top:532px;width:1px;height:19px;background:#a0a0a0"></div>
<div class="a" style="left:1041px;top:532px;width:1px;height:19px;background:#a0a0a0"></div>
<div class="a" style="left:1117px;top:532px;width:1px;height:19px;background:#a0a0a0"></div>
<div class="a" style="left:1198px;top:532px;width:1px;height:19px;background:#a0a0a0"></div>
<div class="a" style="left:317px;top:532px;width:1px;height:19px;background:#a0a0a0"></div>
<div class="a" style="left:1272px;top:532px;width:1px;height:19px;background:#a0a0a0"></div>
<div class="t" style="left:319.00px;top:535.69px;font-size:11px;line-height:11px;font-weight:400;color:#000;transform:scaleX(0.9864);transform-origin:0 0;">Define benefits of improvements</div>
<div class="t" style="left:993.60px;top:535.69px;font-size:11px;line-height:11px;font-weight:400;color:#000;transform:scaleX(1.0552);transform-origin:0 0;">0 %</div>
<svg class="a" style="left:1044px;top:533px" width="17" height="17"><use href="#ball"/></svg>
<div class="t" style="left:1064.50px;top:535.69px;font-size:11px;line-height:11px;font-weight:400;color:#000;transform:scaleX(0.9450);transform-origin:0 0;">Normal</div>
<div class="a" style="left:289px;top:540px;width:9px;height:1px;background-image:linear-gradient(90deg,#a0a0a0 50%,transparent 50%);background-size:2px 1px"></div>
<svg class="a" style="left:303px;top:533px" width="12" height="15"><use href="#paper"/></svg>
<svg class="a" style="left:297px;top:537px" width="13" height="13"><use href="#smclk"/></svg>
<div class="a" style="left:317px;top:569px;width:955px;height:1px;background:#a0a0a0"></div>
<div class="a" style="left:730px;top:551px;width:1px;height:19px;background:#a0a0a0"></div>
<div class="a" style="left:796px;top:551px;width:1px;height:19px;background:#a0a0a0"></div>
<div class="a" style="left:891px;top:551px;width:1px;height:19px;background:#a0a0a0"></div>
<div class="a" style="left:966px;top:551px;width:1px;height:19px;background:#a0a0a0"></div>
<div class="a" style="left:1041px;top:551px;width:1px;height:19px;background:#a0a0a0"></div>
<div class="a" style="left:1117px;top:551px;width:1px;height:19px;background:#a0a0a0"></div>
<div class="a" style="left:1198px;top:551px;width:1px;height:19px;background:#a0a0a0"></div>
<div class="a" style="left:317px;top:551px;width:1px;height:19px;background:#a0a0a0"></div>
<div class="a" style="left:1272px;top:551px;width:1px;height:19px;background:#a0a0a0"></div>
<div class="t" style="left:319.00px;top:554.69px;font-size:11px;line-height:11px;font-weight:400;color:#000;transform:scaleX(0.9821);transform-origin:0 0;">Define time duration required to implement the plan</div>
<div class="t" style="left:993.60px;top:554.69px;font-size:11px;line-height:11px;font-weight:400;color:#000;transform:scaleX(1.0552);transform-origin:0 0;">0 %</div>
<svg class="a" style="left:1044px;top:552px" width="17" height="17"><use href="#ball"/></svg>
<div class="t" style="left:1064.50px;top:554.69px;font-size:11px;line-height:11px;font-weight:400;color:#000;transform:scaleX(0.9450);transform-origin:0 0;">Normal</div>
<div class="a" style="left:289px;top:559px;width:9px;height:1px;background-image:linear-gradient(90deg,#a0a0a0 50%,transparent 50%);background-size:2px 1px"></div>
<svg class="a" style="left:303px;top:552px" width="12" height="15"><use href="#paper"/></svg>
<svg class="a" style="left:297px;top:556px" width="13" height="13"><use href="#smclk"/></svg>
<div class="a" style="left:317px;top:588px;width:955px;height:1px;background:#a0a0a0"></div>
<div class="a" style="left:730px;top:570px;width:1px;height:19px;background:#a0a0a0"></div>
<div class="a" style="left:796px;top:570px;width:1px;height:19px;background:#a0a0a0"></div>
<div class="a" style="left:891px;top:570px;width:1px;height:19px;background:#a0a0a0"></div>
<div class="a" style="left:966px;top:570px;width:1px;height:19px;background:#a0a0a0"></div>
<div class="a" style="left:1041px;top:570px;width:1px;height:19px;background:#a0a0a0"></div>
<div class="a" style="left:1117px;top:570px;width:1px;height:19px;background:#a0a0a0"></div>
<div class="a" style="left:1198px;top:570px;width:1px;height:19px;background:#a0a0a0"></div>
<div class="a" style="left:317px;top:570px;width:1px;height:19px;background:#a0a0a0"></div>
<div class="a" style="left:1272px;top:570px;width:1px;height:19px;background:#a0a0a0"></div>
<div class="t" style="left:319.00px;top:573.69px;font-size:11px;line-height:11px;font-weight:400;color:#000;transform:scaleX(0.9842);transform-origin:0 0;">Develop a plan of corrective actions</div>
<div class="t" style="left:993.60px;top:573.69px;font-size:11px;line-height:11px;font-weight:400;color:#000;transform:scaleX(1.0552);transform-origin:0 0;">0 %</div>
<svg class="a" style="left:1044px;top:571px" width="17" height="17"><use href="#ball"/></svg>
<div class="t" style="left:1064.50px;top:573.69px;font-size:11px;line-height:11px;font-weight:400;color:#000;transform:scaleX(0.9450);transform-origin:0 0;">Normal</div>
<div class="a" style="left:289px;top:578px;width:9px;height:1px;background-image:linear-gradient(90deg,#a0a0a0 50%,transparent 50%);background-size:2px 1px"></div>
<svg class="a" style="left:303px;top:571px" width="12" height="15"><use href="#paper"/></svg>
<svg class="a" style="left:297px;top:575px" width="13" height="13"><use href="#smclk"/></svg>
<div class="a" style="left:317px;top:607px;width:955px;height:1px;background:#a0a0a0"></div>
<div class="a" style="left:730px;top:589px;width:1px;height:19px;background:#a0a0a0"></div>
<div class="a" style="left:796px;top:589px;width:1px;height:19px;background:#a0a0a0"></div>
<div class="a" style="left:891px;top:589px;width:1px;height:19px;background:#a0a0a0"></div>
<div class="a" style="left:966px;top:589px;width:1px;height:19px;background:#a0a0a0"></div>
<div class="a" style="left:1041px;top:589px;width:1px;height:19px;background:#a0a0a0"></div>
<div class="a" style="left:1117px;top:589px;width:1px;height:19px;background:#a0a0a0"></div>
<div class="a" style="left:1198px;top:589px;width:1px;height:19px;background:#a0a0a0"></div>
<div class="a" style="left:317px;top:589px;width:1px;height:19px;background:#a0a0a0"></div>
<div class="a" style="left:1272px;top:589px;width:1px;height:19px;background:#a0a0a0"></div>
<div class="t" style="left:319.00px;top:592.69px;font-size:11px;line-height:11px;font-weight:400;color:#000;transform:scaleX(0.9836);transform-origin:0 0;">Implement improvements to the process/system</div>
<div class="t" style="left:993.60px;top:592.69px;font-size:11px;line-height:11px;font-weight:400;color:#000;transform:scaleX(1.0552);transform-origin:0 0;">0 %</div>
<svg class="a" style="left:1044px;top:590px" width="17" height="17"><use href="#ball"/></svg>
<div class="t" style="left:1064.50px;top:592.69px;font-size:11px;line-height:11px;font-weight:400;color:#000;transform:scaleX(0.9450);transform-origin:0 0;">Normal</div>
<div class="a" style="left:289px;top:597px;width:9px;height:1px;background-image:linear-gradient(90deg,#a0a0a0 50%,transparent 50%);background-size:2px 1px"></div>
<svg class="a" style="left:303px;top:590px" width="12" height="15"><use href="#paper"/></svg>
<svg class="a" style="left:297px;top:594px" width="13" height="13"><use href="#smclk"/></svg>
<div class="a" style="left:317px;top:626px;width:955px;height:1px;background:#a0a0a0"></div>
<div class="a" style="left:730px;top:608px;width:1px;height:19px;background:#a0a0a0"></div>
<div class="a" style="left:796px;top:608px;width:1px;height:19px;background:#a0a0a0"></div>
<div class="a" style="left:891px;top:608px;width:1px;height:19px;background:#a0a0a0"></div>
<div class="a" style="left:966px;top:608px;width:1px;height:19px;background:#a0a0a0"></div>
<div class="a" style="left:1041px;top:608px;width:1px;height:19px;background:#a0a0a0"></div>
<div class="a" style="left:1117px;top:608px;width:1px;height:19px;background:#a0a0a0"></div>
<div class="a" style="left:1198px;top:608px;width:1px;height:19px;background:#a0a0a0"></div>
<div class="a" style="left:317px;top:608px;width:1px;height:19px;background:#a0a0a0"></div>
<div class="a" style="left:1272px;top:608px;width:1px;height:19px;background:#a0a0a0"></div>
<div class="t" style="left:319.00px;top:611.69px;font-size:11px;line-height:11px;font-weight:400;color:#000;transform:scaleX(0.9889);transform-origin:0 0;">Report on results of the improvement process.</div>
<div class="t" style="left:993.60px;top:611.69px;font-size:11px;line-height:11px;font-weight:400;color:#000;transform:scaleX(1.0552);transform-origin:0 0;">0 %</div>
<svg class="a" style="left:1044px;top:609px" width="17" height="17"><use href="#ball"/></svg>
<div class="t" style="left:1064.50px;top:611.69px;font-size:11px;line-height:11px;font-weight:400;color:#000;transform:scaleX(0.9450);transform-origin:0 0;">Normal</div>
<div class="a" style="left:289px;top:616px;width:9px;height:1px;background-image:linear-gradient(90deg,#a0a0a0 50%,transparent 50%);background-size:2px 1px"></div>
<svg class="a" style="left:303px;top:609px" width="12" height="15"><use href="#paper"/></svg>
<svg class="a" style="left:297px;top:613px" width="13" height="13"><use href="#smclk"/></svg>
<div class="a" style="left:279px;top:627px;width:993px;height:18px;background:#c6f9fa"></div>
<div class="a" style="left:279px;top:645px;width:993px;height:1px;background:#8eaaaa"></div>
<div class="a" style="left:730px;top:627px;width:1px;height:19px;background:#8eaaaa"></div>
<div class="a" style="left:796px;top:627px;width:1px;height:19px;background:#8eaaaa"></div>
<div class="a" style="left:891px;top:627px;width:1px;height:19px;background:#8eaaaa"></div>
<div class="a" style="left:966px;top:627px;width:1px;height:19px;background:#8eaaaa"></div>
<div class="a" style="left:1041px;top:627px;width:1px;height:19px;background:#8eaaaa"></div>
<div class="a" style="left:1117px;top:627px;width:1px;height:19px;background:#8eaaaa"></div>
<div class="a" style="left:1198px;top:627px;width:1px;height:19px;background:#8eaaaa"></div>
<div class="a" style="left:279px;top:627px;width:1px;height:19px;background:#8eaaaa"></div>
<div class="a" style="left:1272px;top:627px;width:1px;height:19px;background:#8eaaaa"></div>
<div class="t" style="left:282.00px;top:630.69px;font-size:11px;line-height:11px;font-weight:400;color:#000;transform:scaleX(0.9430);transform-origin:0 0;">"Control" Phase</div>
<div class="t" style="left:993.60px;top:630.69px;font-size:11px;line-height:11px;font-weight:400;color:#000;transform:scaleX(1.0552);transform-origin:0 0;">0 %</div>
<div class="a" style="left:246px;top:631px;width:9px;height:9px;border:1px solid #8c96a4;border-radius:1px;background:linear-gradient(#ffffff 0%,#f4f6f9 50%,#dfe3ea 100%)"></div>
<div class="a" style="left:248px;top:635px;width:5px;height:1px;background:#34446a"></div>
<div class="a" style="left:250px;top:633px;width:1px;height:5px;background:#34446a"></div>
<div class="a" style="left:255px;top:635px;width:11px;height:1px;background-image:linear-gradient(90deg,#a0a0a0 50%,transparent 50%);background-size:2px 1px"></div>
<svg class="a" style="left:263px;top:627px" width="14" height="12"><use href="#folder"/></svg>
<svg class="a" style="left:259px;top:632px" width="13" height="13"><use href="#smclk"/></svg>
<div class="t" style="left:783.50px;top:269.69px;font-size:11px;line-height:11px;font-weight:400;color:#fff;transform:scaleX(0.8173);transform-origin:0 0;">12</div>
<svg class="a" style="left:895px;top:266px" width="16" height="12" viewBox="0 0 16 12"><rect x="5.5" y="1.5" width="9" height="10" fill="#f8f8f8" stroke="#d0d0d0" stroke-width="0.8"/><path d="M4 6L5 8.5L7.5 7.5L6.5 10L9 11H1L3.5 10L2.5 7.5L5 8.5Z" fill="#f0a030"/><circle cx="4.5" cy="9.5" r="2.2" fill="#f8b840"/></svg>
<div class="t" style="left:913.00px;top:269.69px;font-size:11px;line-height:11px;font-weight:400;color:#fff;transform:scaleX(1.0221);transform-origin:0 0;">Created</div>
<div class="a" style="left:222px;top:645px;width:1050px;height:1px;background:#a0a0a0"></div>
<div class="a" style="left:223px;top:976px;width:1050px;height:23px;background:#f0f0f0"></div>
<div class="a" style="left:731px;top:979px;width:64px;height:17px;background:#e8e9eb"></div>
<div class="a" style="left:731px;top:979px;width:1px;height:17px;background:#a0a0a0"></div>
<div class="a" style="left:731px;top:979px;width:64px;height:1px;background:#a0a0a0"></div>
<div class="t" style="left:735.00px;top:982.69px;font-size:11px;line-height:11px;font-weight:400;color:#000;transform:scaleX(0.8990);transform-origin:0 0;">99</div>
<div class="a" style="left:222px;top:998px;width:1052px;height:2px;background:#8e8e8e"></div>
<div class="a" style="left:0px;top:1002px;width:1280px;height:1px;background:#9a9a9a"></div>
<div class="a" style="left:0px;top:1003px;width:1280px;height:1px;background:#ffffff"></div>
<div class="a" style="left:0px;top:1004px;width:1280px;height:1px;background:#9a9a9a"></div>
<div class="a" style="left:0px;top:1005px;width:1280px;height:17px;background:#f0eeee"></div>
<div class="a" style="left:28px;top:1006px;width:1px;height:15px;background:#c8c8c8"></div>
<div class="a" style="left:4px;top:1011px;width:17px;height:8px;background:#8a8a8a;border:1px solid #787878"></div>
<svg class="a" style="left:5px;top:1012px" width="15" height="6" viewBox="0 0 15 6"><path d="M0.5 0.5H14.5L12 3H3Z" fill="#c8c8c8"/><path d="M0.5 0.5L3 3L0.5 5.5Z" fill="#d8d8d8"/></svg>
<div class="a" style="left:233px;top:1006px;width:102px;height:16px;border:1px solid #a8a8a8;border-bottom:none;border-radius:2px 2px 0 0;background:linear-gradient(#fafafa 0%,#ececec 40%,#d2d2d2 55%,#d6d6d6 100%)"></div>
<div class="t" style="left:275.00px;top:1008.69px;font-size:11px;line-height:11px;font-weight:400;color:#000;transform:scaleX(0.9496);transform-origin:0 0;">0 %</div>
<div class="a" style="left:0px;top:1022px;width:1280px;height:1px;background:#2c3e54"></div>
<div class="a" style="left:0px;top:1023px;width:1280px;height:1px;background:#9ec2e6"></div>
<div class="a" style="left:743px;top:275px;width:249px;height:428px;background:rgba(0,0,0,0.10);filter:blur(1.5px)"></div>
<div class="a" style="left:741px;top:273px;width:247px;height:426px;background:#f0f0f0;border:1px solid #979797"></div>
<div class="t" style="left:768.00px;top:279.84px;font-size:12px;line-height:12px;font-weight:400;color:#000;transform:scaleX(0.9750);transform-origin:0 0;">New Task</div>
<div class="t" style="left:945.00px;top:279.84px;font-size:12px;line-height:12px;font-weight:400;color:#000;transform:scaleX(0.9058);transform-origin:0 0;">Ins</div>
<svg class="a" style="left:975px;top:282px" width="5" height="8" viewBox="0 0 5 8"><path d="M0 0L4.5 4L0 8Z" fill="#000"/></svg>
<svg class="a" style="left:744px;top:277px" width="20" height="19"><use href="#mi_newtask"/></svg>
<div class="t" style="left:768.00px;top:301.84px;font-size:12px;line-height:12px;font-weight:400;color:#000;transform:scaleX(0.9771);transform-origin:0 0;">New Group</div>
<div class="t" style="left:925.70px;top:301.84px;font-size:12px;line-height:12px;font-weight:400;color:#000;transform:scaleX(0.9656);transform-origin:0 0;">Ctrl+G</div>
<svg class="a" style="left:744px;top:299px" width="20" height="19"><use href="#mi_newgroup"/></svg>
<div class="t" style="left:768.00px;top:323.84px;font-size:12px;line-height:12px;font-weight:400;color:#000;transform:scaleX(0.9430);transform-origin:0 0;">Edit</div>
<div class="t" style="left:948.30px;top:323.84px;font-size:12px;line-height:12px;font-weight:400;color:#000;transform:scaleX(0.7998);transform-origin:0 0;">F4</div>
<svg class="a" style="left:744px;top:321px" width="20" height="19"><use href="#mi_edit"/></svg>
<div class="t" style="left:768.00px;top:345.84px;font-size:12px;line-height:12px;font-weight:400;color:#000;transform:scaleX(0.9398);transform-origin:0 0;">Delete</div>
<div class="t" style="left:948.30px;top:345.84px;font-size:12px;line-height:12px;font-weight:400;color:#000;transform:scaleX(0.7998);transform-origin:0 0;">F8</div>
<svg class="a" style="left:744px;top:343px" width="20" height="19"><use href="#mi_delete"/></svg>
<div class="a" style="left:745px;top:365px;width:239px;height:1px;background:#a0a0a0"></div>
<div class="a" style="left:745px;top:366px;width:239px;height:1px;background:#ffffff"></div>
<div class="t" style="left:768.00px;top:373.84px;font-size:12px;line-height:12px;font-weight:400;color:#000;transform:scaleX(0.9915);transform-origin:0 0;">Duplicate</div>
<div class="t" style="left:925.70px;top:373.84px;font-size:12px;line-height:12px;font-weight:400;color:#000;transform:scaleX(0.9844);transform-origin:0 0;">Ctrl+D</div>
<div class="t" style="left:768.00px;top:395.84px;font-size:12px;line-height:12px;font-weight:400;color:#000;transform:scaleX(0.9879);transform-origin:0 0;">Insert copy of task group...</div>
<div class="a" style="left:745px;top:415px;width:239px;height:1px;background:#a0a0a0"></div>
<div class="a" style="left:745px;top:416px;width:239px;height:1px;background:#ffffff"></div>
<div class="t" style="left:768.00px;top:423.84px;font-size:12px;line-height:12px;font-weight:400;color:#8d8d8d;transform:scaleX(0.9677);transform-origin:0 0;">Roll up recurrence task</div>
<div class="a" style="left:745px;top:443px;width:239px;height:1px;background:#a0a0a0"></div>
<div class="a" style="left:745px;top:444px;width:239px;height:1px;background:#ffffff"></div>
<div class="a" style="left:766px;top:447px;width:220px;height:22px;background:#3399ff"></div>
<div class="t" style="left:768.00px;top:451.84px;font-size:12px;line-height:12px;font-weight:400;color:#fff;transform:scaleX(0.9510);transform-origin:0 0;">Change Status</div>
<svg class="a" style="left:975px;top:454px" width="5" height="8" viewBox="0 0 5 8"><path d="M0 0L4.5 4L0 8Z" fill="#fff"/></svg>
<svg class="a" style="left:744px;top:449px" width="20" height="19"><use href="#mi_status"/></svg>
<div class="a" style="left:745px;top:471px;width:239px;height:1px;background:#a0a0a0"></div>
<div class="a" style="left:745px;top:472px;width:239px;height:1px;background:#ffffff"></div>
<div class="t" style="left:768.00px;top:479.84px;font-size:12px;line-height:12px;font-weight:400;color:#000;transform:scaleX(0.9620);transform-origin:0 0;">Increase Priority</div>
<div class="t" style="left:886.30px;top:479.84px;font-size:12px;line-height:12px;font-weight:400;color:#000;transform:scaleX(1.0162);transform-origin:0 0;">Shift+Ctrl+Up</div>
<svg class="a" style="left:744px;top:477px" width="20" height="19"><use href="#mi_inc"/></svg>
<div class="t" style="left:768.00px;top:501.84px;font-size:12px;line-height:12px;font-weight:400;color:#000;transform:scaleX(0.9475);transform-origin:0 0;">Decrease Priority</div>
<div class="t" style="left:870.20px;top:501.84px;font-size:12px;line-height:12px;font-weight:400;color:#000;transform:scaleX(1.0221);transform-origin:0 0;">Shift+Ctrl+Down</div>
<svg class="a" style="left:744px;top:499px" width="20" height="19"><use href="#mi_dec"/></svg>
<div class="a" style="left:745px;top:521px;width:239px;height:1px;background:#a0a0a0"></div>
<div class="a" style="left:745px;top:522px;width:239px;height:1px;background:#ffffff"></div>
<div class="t" style="left:768.00px;top:529.84px;font-size:12px;line-height:12px;font-weight:400;color:#000;transform:scaleX(0.9525);transform-origin:0 0;">Filter</div>
<svg class="a" style="left:975px;top:532px" width="5" height="8" viewBox="0 0 5 8"><path d="M0 0L4.5 4L0 8Z" fill="#000"/></svg>
<div class="t" style="left:768.00px;top:551.84px;font-size:12px;line-height:12px;font-weight:400;color:#000;transform:scaleX(0.9705);transform-origin:0 0;">Sorting</div>
<svg class="a" style="left:975px;top:554px" width="5" height="8" viewBox="0 0 5 8"><path d="M0 0L4.5 4L0 8Z" fill="#000"/></svg>
<div class="a" style="left:745px;top:571px;width:239px;height:1px;background:#a0a0a0"></div>
<div class="a" style="left:745px;top:572px;width:239px;height:1px;background:#ffffff"></div>
<div class="t" style="left:768.00px;top:579.84px;font-size:12px;line-height:12px;font-weight:400;color:#000;">Move to archive</div>
<div class="a" style="left:745px;top:599px;width:239px;height:1px;background:#a0a0a0"></div>
<div class="a" style="left:745px;top:600px;width:239px;height:1px;background:#ffffff"></div>
<div class="t" style="left:768.00px;top:607.84px;font-size:12px;line-height:12px;font-weight:400;color:#000;transform:scaleX(0.9611);transform-origin:0 0;">Expand All</div>
<svg class="a" style="left:744px;top:605px" width="20" height="19"><use href="#mi_expand"/></svg>
<div class="t" style="left:768.00px;top:629.84px;font-size:12px;line-height:12px;font-weight:400;color:#000;transform:scaleX(0.9776);transform-origin:0 0;">Collapse All</div>
<svg class="a" style="left:744px;top:627px" width="20" height="19"><use href="#mi_collapse"/></svg>
<div class="a" style="left:745px;top:649px;width:239px;height:1px;background:#a0a0a0"></div>
<div class="a" style="left:745px;top:650px;width:239px;height:1px;background:#ffffff"></div>
<div class="t" style="left:768.00px;top:657.84px;font-size:12px;line-height:12px;font-weight:400;color:#000;transform:scaleX(0.9550);transform-origin:0 0;">Sending task(s) by Email...</div>
<div class="t" style="left:768.00px;top:679.84px;font-size:12px;line-height:12px;font-weight:400;color:#000;transform:scaleX(1.0076);transform-origin:0 0;">Export/Printing</div>
<svg class="a" style="left:975px;top:682px" width="5" height="8" viewBox="0 0 5 8"><path d="M0 0L4.5 4L0 8Z" fill="#000"/></svg>
<div class="a" style="left:989px;top:447px;width:114px;height:137px;background:rgba(0,0,0,0.10);filter:blur(1.5px)"></div>
<div class="a" style="left:987px;top:445px;width:112px;height:135px;background:#f0f0f0;border:1px solid #979797"></div>
<svg class="a" style="left:996px;top:449px" width="12" height="16"><use href="#paper_st"/></svg>
<svg class="a" style="left:988px;top:450px" width="16" height="16"><use href="#st_draft"/></svg>
<div class="t" style="left:1013.30px;top:451.84px;font-size:12px;line-height:12px;font-weight:400;color:#000;transform:scaleX(0.9729);transform-origin:0 0;">Draft</div>
<svg class="a" style="left:996px;top:471px" width="12" height="16"><use href="#paper_st"/></svg>
<svg class="a" style="left:988px;top:472px" width="16" height="16"><use href="#st_created"/></svg>
<div class="t" style="left:1013.30px;top:473.84px;font-size:12px;line-height:12px;font-weight:400;color:#000;transform:scaleX(0.9370);transform-origin:0 0;">Created</div>
<svg class="a" style="left:996px;top:493px" width="12" height="16"><use href="#paper_st"/></svg>
<svg class="a" style="left:988px;top:494px" width="16" height="16"><use href="#st_prog"/></svg>
<div class="t" style="left:1013.30px;top:495.84px;font-size:12px;line-height:12px;font-weight:400;color:#000;transform:scaleX(0.9436);transform-origin:0 0;">In Progress</div>
<svg class="a" style="left:996px;top:515px" width="12" height="16"><use href="#paper_st"/></svg>
<svg class="a" style="left:988px;top:516px" width="16" height="16"><use href="#st_cancel"/></svg>
<div class="t" style="left:1013.30px;top:517.84px;font-size:12px;line-height:12px;font-weight:400;color:#000;transform:scaleX(0.9556);transform-origin:0 0;">Cancelled</div>
<svg class="a" style="left:996px;top:537px" width="12" height="16"><use href="#paper_st"/></svg>
<svg class="a" style="left:988px;top:538px" width="16" height="16"><use href="#st_done"/></svg>
<div class="t" style="left:1013.30px;top:539.84px;font-size:12px;line-height:12px;font-weight:400;color:#000;">Completed</div>
<svg class="a" style="left:996px;top:559px" width="12" height="16"><use href="#paper_st"/></svg>
<svg class="a" style="left:988px;top:560px" width="16" height="16"><use href="#st_verif"/></svg>
<div class="t" style="left:1013.30px;top:561.84px;font-size:12px;line-height:12px;font-weight:400;color:#000;transform:scaleX(0.9769);transform-origin:0 0;">Verified</div></body></html>
